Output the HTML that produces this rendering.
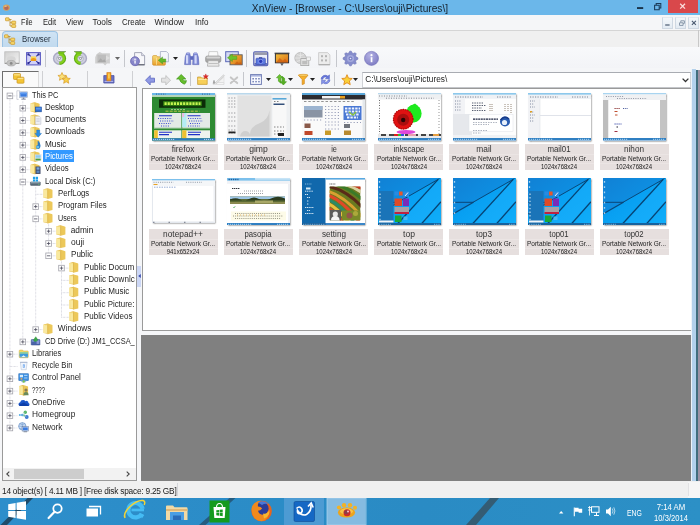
<!DOCTYPE html>
<html><head><meta charset="utf-8"><title>XnView</title>
<style>
*{margin:0;padding:0;box-sizing:border-box}
html,body{width:700px;height:525px;overflow:hidden;background:#f5f6f8;font-family:"Liberation Sans",sans-serif;font-size:8.2px;color:#1a1a1a}
.a{position:absolute}
.t{position:absolute;white-space:nowrap;line-height:10px;height:10px}
svg{position:absolute;overflow:visible}
#root{position:absolute;left:0;top:0;width:700px;height:525px;overflow:hidden;will-change:transform}
#title{left:0;top:0;width:700px;height:15.4px;background:#6bb7ea}
#menubar{left:0;top:15.4px;width:700px;height:14.1px;background:#f5f6f8}
#tabrow{left:0;top:29.5px;width:700px;height:17.5px;background:#f0f0f0;border-top:1px solid #d5d5d5}
#tb1{left:0;top:47px;width:700px;height:21px;background:linear-gradient(#f8f9fb,#f3f4f7)}
#tb2{left:0;top:68px;width:700px;height:20px;background:#f5f6f8}
#tree{left:1.5px;top:87.2px;width:135.4px;height:393.8px;background:#fff;border:1px solid #9a9a9a;overflow:hidden}
#thumbs{left:141.9px;top:88px;width:549.1px;height:243px;background:#fff;border:1px solid #9a9a9a;border-right:none;overflow:hidden}
#preview{left:141px;top:335px;width:550px;height:146px;background:#808080}
#status{left:0;top:481px;width:700px;height:17px;background:#f0f0f0}
#taskbar{left:0;top:498px;width:700px;height:27px;background:#2b8cc9;overflow:hidden}
.sep{position:absolute;width:1px;background:#c5c7cc}
.lab{position:absolute;background:linear-gradient(#e6dfde 0,#e6dfde 10px,#ebe5e4 10px,#ebe5e4 10.7px,#e6dfde 10.7px,#e6dfde 19.1px,#ebe5e4 19.1px,#ebe5e4 19.800px,#e6dfde 19.800px);width:69.3px;height:26.6px}
.th{position:absolute;box-shadow:1.4px 1.4px 1.6px rgba(40,40,40,.72)}
</style></head><body><div id="root">
<div id="title" class="a"></div>
<svg style="left:2px;top:3px" width="9" height="9" viewBox="0 0 9 9"><ellipse cx="4.4" cy="4.6" rx="3.5" ry="3.2" fill="#d2a060"/><ellipse cx="4.4" cy="4.9" rx="2.3" ry="2" fill="#b46a5c"/><ellipse cx="3.6" cy="3.200" rx="1.300" ry=".8" fill="#e4c080"/></svg>
<div class="t" style="left:250px;width:200px;text-align:center;top:2.5999999999999996px;font-size:10.2px;color:#16222e;line-height:11px;height:11px;">XnView - [Browser - C:\Users\ouji\Pictures\]</div>
<div class="a" style="left:667.5px;top:0;width:30.5px;height:12.7px;background:#d9484b"></div>
<svg style="left:630px;top:0" width="70" height="15" viewBox="0 0 70 15"><rect x="7" y="7.2" width="6.2" height="1.7" fill="#12263a"/><path d="M24.6 5.2h4.6v4.600h-4.600z M26.2 5v-1.600h4.600v4.600h-1.500" fill="none" stroke="#1a3a58" stroke-width="1.050"/><path d="M50.200 3.800l4.800 4.800M55 3.800l-4.800 4.800" stroke="#fbdcdc" stroke-width="1.300" fill="none"/></svg>
<div id="menubar" class="a"></div>
<svg style="left:5px;top:16.6px" width="12" height="11" viewBox="0 0 12 11"><path d="M3 2.5h3.5M5 2.5v6.5h2M5 5.7h2" stroke="#b58a2a" stroke-width=".8" fill="none"/><rect x=".5" y=".8" width="3.6" height="3" rx=".5" fill="#f7d66a" stroke="#c8962c" stroke-width=".7"/><rect x="6.7" y="4.1" width="4" height="2.8" rx=".5" fill="#f7d66a" stroke="#c8962c" stroke-width=".7"/><rect x="6.7" y="7.6" width="4" height="2.8" rx=".5" fill="#f7d66a" stroke="#c8962c" stroke-width=".7"/></svg>
<div class="t" style="left:20.7px;top:17.4px;font-size:8.3px;color:#222;transform:scaleX(0.87);transform-origin:0 50%;">File</div>
<div class="t" style="left:42.6px;top:17.4px;font-size:8.3px;color:#222;transform:scaleX(0.91);transform-origin:0 50%;">Edit</div>
<div class="t" style="left:65.5px;top:17.4px;font-size:8.3px;color:#222;transform:scaleX(0.98);transform-origin:0 50%;">View</div>
<div class="t" style="left:92.5px;top:17.4px;font-size:8.3px;color:#222;transform:scaleX(1);transform-origin:0 50%;">Tools</div>
<div class="t" style="left:121.7px;top:17.4px;font-size:8.3px;color:#222;transform:scaleX(0.945);transform-origin:0 50%;">Create</div>
<div class="t" style="left:154.5px;top:17.4px;font-size:8.3px;color:#222;transform:scaleX(1);transform-origin:0 50%;">Window</div>
<div class="t" style="left:194.5px;top:17.4px;font-size:8.3px;color:#222;transform:scaleX(0.975);transform-origin:0 50%;">Info</div>
<div class="a" style="left:661.5px;top:17px;width:11px;height:12px;background:linear-gradient(#f4f7fa,#e3ebf3);border:1px solid #cfd8e2;border-top-color:#e4e9ef"></div>
<div class="a" style="left:675px;top:17px;width:11px;height:12px;background:linear-gradient(#f4f7fa,#e3ebf3);border:1px solid #cfd8e2;border-top-color:#e4e9ef"></div>
<div class="a" style="left:688px;top:17px;width:11px;height:12px;background:linear-gradient(#f4f7fa,#e3ebf3);border:1px solid #cfd8e2;border-top-color:#e4e9ef"></div>
<svg style="left:661.5px;top:17px" width="38" height="12" viewBox="0 0 38 12"><rect x="3.2" y="7.4" width="4.4" height="1.2" fill="#4a5a70"/><path d="M17.5 5.8h3.6v2.6h-3.6zM18.8 5.5v-1.7h3.6v2.6h-1.2" fill="none" stroke="#7f8ea3" stroke-width=".9"/><path d="M29.9 3.9l4 4M33.9 3.9l-4 4" stroke="#4a5a70" stroke-width="1.1"/></svg>
<div id="tabrow" class="a"></div>
<div class="a" style="left:1.5px;top:31px;width:56.5px;height:16.5px;background:linear-gradient(#cfe3f4,#c0d9ee);border:1px solid #9cc3e4;border-bottom:none;border-radius:4px 4px 0 0"></div>
<svg style="left:4px;top:33.6px" width="12" height="11" viewBox="0 0 12 11"><path d="M3 2.5h3.5M5 2.5v6.5h2M5 5.7h2" stroke="#b58a2a" stroke-width=".8" fill="none"/><rect x=".5" y=".8" width="3.6" height="3" rx=".5" fill="#f7d66a" stroke="#c8962c" stroke-width=".7"/><rect x="6.7" y="4.1" width="4" height="2.8" rx=".5" fill="#f7d66a" stroke="#c8962c" stroke-width=".7"/><rect x="6.7" y="7.6" width="4" height="2.8" rx=".5" fill="#f7d66a" stroke="#c8962c" stroke-width=".7"/></svg>
<div class="t" style="left:21.8px;top:34.1px;font-size:8.3px;color:#26323f;transform:scaleX(0.94);transform-origin:0 50%;">Browser</div>
<div id="tb1" class="a"></div>
<div id="tb2" class="a"></div>
<div class="sep" style="left:45.0px;top:50px;height:17px"></div>
<div class="sep" style="left:124.0px;top:50px;height:17px"></div>
<div class="sep" style="left:246.0px;top:50px;height:17px"></div>
<div class="sep" style="left:336.0px;top:50px;height:17px"></div>
<div class="sep" style="left:190.0px;top:72px;height:14px"></div>
<div class="sep" style="left:242.5px;top:72px;height:14px"></div>
<div class="sep" style="left:334.0px;top:72px;height:14px"></div>
<svg style="left:115.3px;top:57px" width="5" height="3" viewBox="0 0 5 3"><path d="M0 0h5l-2.5 3z" fill="#666"/></svg>
<svg style="left:173.3px;top:57px" width="5" height="3" viewBox="0 0 5 3"><path d="M0 0h5l-2.5 3z" fill="#222"/></svg>
<svg style="left:265.8px;top:78px" width="5" height="3" viewBox="0 0 5 3"><path d="M0 0h5l-2.5 3z" fill="#222"/></svg>
<svg style="left:288px;top:78px" width="5" height="3" viewBox="0 0 5 3"><path d="M0 0h5l-2.5 3z" fill="#222"/></svg>
<svg style="left:310px;top:78px" width="5" height="3" viewBox="0 0 5 3"><path d="M0 0h5l-2.5 3z" fill="#222"/></svg>
<svg style="left:353px;top:78px" width="5" height="3" viewBox="0 0 5 3"><path d="M0 0h5l-2.5 3z" fill="#222"/></svg>
<svg style="left:4px;top:51px" width="16" height="15.5" viewBox="0 0 16 15.5"><defs><linearGradient id="g1" x1="0" y1="0" x2="1" y2="1"><stop offset="0" stop-color="#d0d0d0"/><stop offset="1" stop-color="#f4f4f4"/></linearGradient></defs><rect x=".8" y=".8" width="14.4" height="11.8" fill="url(#g1)" stroke="#b9b9b9" stroke-width=".8"/><path d="M1 12.3h14" stroke="#8f8f8f" stroke-width="1"/><ellipse cx="7.2" cy="8.2" rx="4.5" ry="3" fill="#d6d6d6"/><ellipse cx="7.2" cy="12.2" rx="4.4" ry="2.8" fill="#c2c2c2" stroke="#a2a2a2" stroke-width=".6"/><circle cx="7.2" cy="12.4" r="1.4" fill="#8a8a8a"/></svg>
<svg style="left:25.500px;top:51.500px" width="15" height="13.500" viewBox="0 0 15 13.500"><rect x=".6" y=".6" width="13.800" height="12.300" fill="#d2d2f8" stroke="#5656c0" stroke-width="1"/><path d="M2 2l2.800 2.400M13 2l-2.800 2.400M2 11.500l2.800-2.400M13 11.500l-2.800-2.400" stroke="#3434a0" stroke-width="1.100"/><rect x="1.400" y="1.400" width="2" height="2" fill="#2c2c94"/><rect x="11.600" y="1.400" width="2" height="2" fill="#2c2c94"/><rect x="1.400" y="10.100" width="2" height="2" fill="#2c2c94"/><rect x="11.600" y="10.100" width="2" height="2" fill="#2c2c94"/><rect x="4.800" y="4.400" width="5.400" height="4.600" fill="#f8d858"/><path d="M4.800 9v-2q2.700-2.200 5.400 0v2z" fill="#ee9a18"/></svg>
<svg style="left:0;top:0" width="130" height="70" viewBox="0 0 130 70"><g transform="translate(52.0,50.900)"><path d="M7.500 .9A6.600 6.600 0 0 0 7.500 14.100Z" fill="#a9a9c4"/><path d="M7.500 2.300A5.200 5.200 0 0 0 7.500 12.700Z" fill="#cfcfe0"/><path d="M7.500 .9A6.600 6.600 0 0 1 7.500 14.100Z" fill="#5eaa14"/><path d="M7.500 2A5.500 5.500 0 0 1 7.500 13Z" fill="#84d01c"/><path d="M6.300 .7h7.600" stroke="#3c7410" stroke-width=".7"/><path d="M6.300 1h6.500l-1 2H6.300z" fill="#74c218"/><circle cx="7.500" cy="7.700" r="2.900" fill="#e6e8ee" stroke="#8e92a8" stroke-width=".5"/><path d="M5.800 6.800h3.400L7.500 9.200z" fill="#fff" stroke="#4a5060" stroke-width=".5"/></g></svg>
<svg style="left:0;top:0" width="130" height="70" viewBox="0 0 130 70"><g transform="translate(88.0,50.900) scale(-1,1)"><path d="M7.500 .9A6.600 6.600 0 0 0 7.500 14.100Z" fill="#a9a9c4"/><path d="M7.500 2.300A5.200 5.200 0 0 0 7.500 12.700Z" fill="#cfcfe0"/><path d="M7.500 .9A6.600 6.600 0 0 1 7.500 14.100Z" fill="#5eaa14"/><path d="M7.500 2A5.500 5.500 0 0 1 7.500 13Z" fill="#84d01c"/><path d="M6.300 .7h7.600" stroke="#3c7410" stroke-width=".7"/><path d="M6.300 1h6.500l-1 2H6.300z" fill="#74c218"/><circle cx="7.500" cy="7.700" r="2.900" fill="#e6e8ee" stroke="#8e92a8" stroke-width=".5"/><path d="M5.800 6.800h3.400L7.500 9.200z" fill="#fff" stroke="#4a5060" stroke-width=".5"/></g></svg>
<svg style="left:94px;top:50.5px" width="17.5" height="15.5" viewBox="0 0 17.5 15.5"><path d="M2.5 3.2l3.2-2.2 2.4 1.2h7.8v10.2h-3l-1.8 2-2-2H1.2V6.2z" fill="#cfcfcf"/><rect x="3.4" y="3.6" width="8.6" height="7.6" fill="#bdbdbd"/><path d="M3.4 11.2l3.2-4 2.2 2.4 1.6-1.4 1.6 3z" fill="#a9a9a9"/><path d="M12 4.5l4 2.5-4 2.6z" fill="#dedede"/></svg>
<svg style="left:129.5px;top:51.5px" width="15.5" height="14" viewBox="0 0 15.5 14"><path d="M4.6 .6h7l3 3v9.2h-10z" fill="#f7f7fa" stroke="#9c9fb0" stroke-width=".9"/><path d="M11.6 .6v3h3" fill="#dcdce6" stroke="#9c9fb0" stroke-width=".7"/><path d="M5 12.8h9.6" stroke="#50535f" stroke-width="1"/><circle cx="5" cy="9.2" r="4.5" fill="#8584c8" stroke="#6562ae" stroke-width=".7"/><ellipse cx="4.4" cy="7.6" rx="2.6" ry="1.8" fill="#a9a8dc" opacity=".7"/><rect x="4.4" y="8.6" width="1.3" height="3" fill="#fff"/><circle cx="5" cy="7.2" r=".8" fill="#fff"/></svg>
<svg style="left:151.5px;top:50.5px" width="17" height="15" viewBox="0 0 17 15"><defs><linearGradient id="g2" x1="0" y1="0" x2="0" y2="1"><stop offset="0" stop-color="#f8dc78"/><stop offset="1" stop-color="#e9a02c"/></linearGradient></defs><path d="M.6 5.6q0-1 1-1h3l1 1.2h6.8q1 0 1 1v6.4q0 1-1 1H1.6q-1 0-1-1z" fill="url(#g2)" stroke="#c98a22" stroke-width=".6"/><path d="M8.4 .5h6l2 2v8.3h-8z" fill="#f4f6fb" stroke="#9aa2bc" stroke-width=".7"/><path d="M6.2 9.3l4.4-3.4v2h3.2v3h-3.2v2z" fill="#62b82a" stroke="#3f8f17" stroke-width=".4"/><path d="M4 6.8h.9v7H4z" fill="#f9e9a8" opacity=".8"/></svg>
<svg style="left:184px;top:51.500px" width="15.500" height="13.500" viewBox="0 0 15.500 13.500"><path d="M2.600 1h3l.8 3.200.4 8.400H.6l.6-7.600z" fill="#7c88d4" stroke="#5560b4" stroke-width=".6"/><path d="M9.900 1h3l1.400 4 .6 7.600H8.700l.4-8.400z" fill="#7c88d4" stroke="#5560b4" stroke-width=".6"/><rect x="6.200" y="4.200" width="3.100" height="3.600" fill="#5c68be"/><rect x="2" y="3.200" width="2.200" height="8.400" fill="#d4d9f8"/><rect x="10.500" y="3.200" width="2.200" height="8.400" fill="#d4d9f8"/><rect x="2.600" y=".6" width="3" height="1.500" fill="#a0a8e4"/><rect x="9.900" y=".6" width="3" height="1.500" fill="#a0a8e4"/></svg>
<svg style="left:204.500px;top:51px" width="16.500" height="16" viewBox="0 0 16.500 16"><path d="M4 .6h8.500l.6 5H3.400z" fill="#fafafa" stroke="#b2b2b2" stroke-width=".6"/><rect x=".6" y="5" width="15.300" height="6.400" rx="1.800" fill="#a7a7a7" stroke="#8a8a8a" stroke-width=".6"/><rect x="1.400" y="5.600" width="13.700" height="2" rx="1" fill="#d4d4d4"/><path d="M3.200 9.600h10.100l.8 5.600H2.400z" fill="#e9e9e9" stroke="#9a9a9a" stroke-width=".6"/><path d="M3.600 12.500h9.300" stroke="#b5b5b5" stroke-width=".8"/></svg>
<svg style="left:224.500px;top:50.500px" width="18" height="15" viewBox="0 0 18 15"><defs><linearGradient id="g3" x1="0" y1="0" x2="1" y2="1"><stop offset="0" stop-color="#f4c23c"/><stop offset="1" stop-color="#d96a14"/></linearGradient></defs><rect x=".7" y=".7" width="12.600" height="10" fill="#d4daf4" stroke="#5b68b8" stroke-width="1"/><rect x="5" y="3.800" width="12.200" height="10" fill="url(#g3)" stroke="#5a5c62" stroke-width=".9"/><path d="M2.400 6.800l5-3.800v2.200h4.400v3.200H7.400v2.200z" fill="#6cc22c" stroke="#3f9218" stroke-width=".4"/><path d="M9 13.400l3-3 2 1.600 1.400-1 1.600 2.400z" fill="#c65a10" opacity=".7"/></svg>
<svg style="left:252.500px;top:50.500px" width="15.500" height="16" viewBox="0 0 15.500 16"><rect x=".8" y=".8" width="13.900" height="13.800" rx="1" fill="#eceef8" stroke="#5a64b4" stroke-width="1.300"/><rect x="1.400" y="1.400" width="12.700" height="2.600" fill="#9a9cac"/><rect x="1.400" y="12" width="12.700" height="2.400" fill="#6a74c0"/><rect x="3" y="7.200" width="9.400" height="6.200" rx=".8" fill="#5b7ae0" stroke="#3848a8" stroke-width=".6"/><rect x="6" y="6.200" width="3.200" height="1.400" fill="#3848a8"/><circle cx="7.700" cy="10.400" r="2.100" fill="#2a3ab8" stroke="#aab8ff" stroke-width=".6"/></svg>
<svg style="left:273.500px;top:51.500px" width="16" height="14.500" viewBox="0 0 16 14.500"><rect x=".6" y=".6" width="14.800" height="1.400" fill="#55585e"/><rect x="1.400" y="1.800" width="13.200" height="9" fill="url(#g3)" stroke="#2f3136" stroke-width="1"/><path d="M2 10.400l3.800-4.400 3 2.800 2.200-2 3.200 3.600z" fill="#cc5c10" opacity=".75"/><path d="M6.200 11.300h3.600l-1.800 2.600z" fill="#55585e"/></svg>
<svg style="left:294px;top:51.500px" width="17" height="14.500" viewBox="0 0 17 14.500"><circle cx="6.400" cy="6" r="5.600" fill="#d2d2d2" stroke="#b0b0b0" stroke-width=".7"/><path d="M1 6h10.800M6.400 .4v11.200M2.600 2.400q3.800 2.600 7.600 0M2.600 9.600q3.800-2.600 7.600 0" stroke="#ececec" stroke-width=".7" fill="none"/><rect x="6.800" y="6.600" width="8" height="7" fill="#e6e6e6" stroke="#a4a4a4" stroke-width=".8"/><rect x="8.200" y="8.800" width="5.200" height="3.600" fill="#bdbdbd"/><rect x="12.600" y="5" width="4" height="3.600" fill="#f0f0f0" stroke="#b4b4b4" stroke-width=".6"/></svg>
<svg style="left:318px;top:52px" width="12.500" height="13.500" viewBox="0 0 12.500 13.500"><path d="M.6 .6h9l2.300 2.300v9.700H.6z" fill="#ececec" stroke="#c2c2c2" stroke-width=".7"/><path d="M.6 12.800h11.300" stroke="#9c9c9c" stroke-width=".9"/><g fill="#b4b4b4"><rect x="3" y="3.200" width="2" height="2"/><rect x="7" y="3.200" width="2" height="2"/><rect x="3" y="7.400" width="2" height="2"/><rect x="7" y="7.400" width="2" height="2"/></g></svg>
<svg style="left:343px;top:51px" width="15" height="15" viewBox="0 0 15 15"><polygon points="14.86,6.77 14.86,8.23 12.95,9.15 12.53,10.19 13.22,12.19 12.19,13.22 10.19,12.53 9.15,12.95 8.23,14.86 6.77,14.86 5.85,12.95 4.81,12.53 2.81,13.22 1.78,12.19 2.47,10.19 2.05,9.15 0.14,8.23 0.14,6.77 2.05,5.85 2.47,4.81 1.78,2.81 2.81,1.78 4.81,2.47 5.85,2.05 6.77,0.14 8.23,0.14 9.15,2.05 10.19,2.47 12.19,1.78 13.22,2.81 12.53,4.81 12.95,5.85" fill="#868dcc" stroke="#6a70b6" stroke-width=".6" stroke-linejoin="round"/><circle cx="7.500" cy="7.500" r="3.600" fill="#a4aadd"/><circle cx="7.500" cy="7.500" r="1.900" fill="#7a80c4"/><circle cx="7.500" cy="7.500" r=".8" fill="#e4e6f8"/></svg>
<svg style="left:364px;top:51px" width="15" height="15" viewBox="0 0 15 15"><defs><radialGradient id="g4" cx=".4" cy=".3" r=".8"><stop offset="0" stop-color="#b4b2e4"/><stop offset="1" stop-color="#7a77c0"/></radialGradient></defs><circle cx="7.500" cy="7.400" r="7" fill="url(#g4)" stroke="#6c69b4" stroke-width=".6"/><rect x="6.700" y="6.200" width="1.700" height="5" fill="#fff"/><circle cx="7.500" cy="4.200" r="1.100" fill="#fff"/></svg>
<div class="a" style="left:1.500px;top:70.500px;width:37px;height:17.500px;background:#fafafa;border-top:1.500px solid #6e6e6e;border-left:1.500px solid #6e6e6e;border-right:1px solid #dcdcdc"></div>
<div class="sep" style="left:42.3px;top:71px;height:16px;background:#cfd0d3"></div>
<div class="sep" style="left:87.0px;top:71px;height:16px;background:#cfd0d3"></div>
<div class="sep" style="left:132.0px;top:71px;height:16px;background:#cfd0d3"></div>
<svg style="left:13px;top:73px" width="12" height="11" viewBox="0 0 12 11"><rect x="0.5" y="0.5" width="7" height="6" rx=".8" fill="#f4c534" stroke="#c99526" stroke-width=".7"/><rect x="1.1" y="1.2" width="5.8" height="1.200" fill="#fae28c"/><rect x="4" y="4.2" width="7" height="6" rx=".8" fill="#f4c534" stroke="#c99526" stroke-width=".7"/><rect x="4.6" y="4.9" width="5.8" height="1.200" fill="#fae28c"/></svg>
<svg style="left:57px;top:72px" width="15" height="13" viewBox="0 0 15 13"><polygon points="5.00,0.50 6.18,3.18 9.09,3.47 6.90,5.42 7.53,8.28 5.00,6.80 2.47,8.28 3.10,5.42 0.91,3.47 3.82,3.18" fill="#fbe27a" stroke="#d79a22" stroke-width="0.7" stroke-linejoin="round"/><polygon points="9.20,3.50 10.38,6.18 13.29,6.47 11.10,8.42 11.73,11.28 9.20,9.80 6.67,11.28 7.30,8.42 5.11,6.47 8.02,6.18" fill="#f8d04a" stroke="#d79a22" stroke-width="0.7" stroke-linejoin="round"/></svg>
<svg style="left:102.500px;top:72px" width="12" height="12" viewBox="0 0 12 12"><path d="M.8 3.600h10.200v7.400H.8z" fill="#6a72c4" stroke="#4a50a4" stroke-width=".8"/><path d="M1.600 9.400h8.600" stroke="#b4b8ec" stroke-width="1"/><path d="M3.800 .5h4.200v8.300H3.800z" fill="#f4a21c" stroke="#c8701a" stroke-width=".5"/><path d="M5.200 1.400h1.400v5H5.200z" fill="#fbd86a"/></svg>
<svg style="left:144.500px;top:74.500px" width="10" height="10.500" viewBox="0 0 10 10.500"><path d="M.5 5.200L5.200 .5v2.700h4.300v4H5.200v2.800z" fill="#8f99e4" stroke="#5c66c0" stroke-width=".8" stroke-linejoin="round"/></svg>
<svg style="left:161px;top:74.500px" width="10" height="10.500" viewBox="0 0 10 10.500"><path d="M9.500 5.200L4.800 .5v2.700H.5v4h4.300v2.800z" fill="#e2e2e2" stroke="#bcbcbc" stroke-width=".8" stroke-linejoin="round"/></svg>
<svg style="left:175.500px;top:74px" width="11" height="10.500" viewBox="0 0 11 10.500"><path d="M5.200 .5L.6 5h2.800q.6 3.600 4.800 5.200 2.200-1 2.200-3.600-1.600.8-3-.4-.8-.8-.6-1.200h3z" fill="#66be2c" stroke="#3f951a" stroke-width=".7" stroke-linejoin="round"/></svg>
<svg style="left:196.500px;top:73.500px" width="11.500" height="11" viewBox="0 0 11.500 11"><path d="M.6 3h3.200l.8 1h5.600v6.400H.6z" fill="#f7cf58" stroke="#c99a2c" stroke-width=".7"/><rect x="1.200" y="4.600" width="8.400" height="1.400" fill="#fbe7a0"/><polygon points="8.80,-0.10 9.45,1.71 11.37,1.77 9.85,2.94 10.39,4.78 8.80,3.70 7.21,4.78 7.75,2.94 6.23,1.77 8.15,1.71" fill="#e02626" stroke="#b81414" stroke-width="0.4" stroke-linejoin="round"/></svg>
<svg style="left:212px;top:73.500px" width="13" height="11" viewBox="0 0 13 11"><path d="M1 8.600h11v1.800H1z" fill="#fdfdfd" stroke="#c4c4c4" stroke-width=".5"/><path d="M3 9L11.600 .8l.8 1L5 9.400z" fill="#e4e4e4" stroke="#bdbdbd" stroke-width=".6"/><path d="M2 6.400v3.400" stroke="#6a6a6a" stroke-width="1"/><path d="M5.600 8.600h6.400V3.200z" fill="#f2f2f2" stroke="#cfcfcf" stroke-width=".4"/></svg>
<svg style="left:228.500px;top:75.500px" width="10" height="8.500" viewBox="0 0 10 8.500"><path d="M1.800 1.400l6.400 5.700M8.200 1.400L1.800 7.100" stroke="#c6c6c6" stroke-width="2" stroke-linecap="round"/></svg>
<svg style="left:249.500px;top:73.500px" width="12" height="11" viewBox="0 0 12 11"><rect x=".6" y=".6" width="10.800" height="9.800" fill="#fafbff" stroke="#6f7db4" stroke-width="1"/><rect x="1" y="1" width="10" height="1.600" fill="#aab4de"/><g fill="#6f7db4"><rect x="2.400" y="4" width="1.500" height="1.500"/><rect x="5.300" y="4" width="1.500" height="1.500"/><rect x="8.200" y="4" width="1.500" height="1.500"/><rect x="2.400" y="6.900" width="1.500" height="1.500"/><rect x="5.300" y="6.900" width="1.500" height="1.500"/><rect x="8.200" y="6.900" width="1.500" height="1.500"/></g></svg>
<svg style="left:275.500px;top:73.500px" width="11" height="11.500" viewBox="0 0 11 11.500"><path d="M3.600 .5L.5 3.800h1.900v3.400l2.500 2V3.800h1.900z" fill="#6cc230" stroke="#3f951a" stroke-width=".6" stroke-linejoin="round"/><path d="M7.400 11L10.500 7.700H8.600V4.300l-2.500-2v5.400H4.200z" fill="#56ae22" stroke="#3f951a" stroke-width=".6" stroke-linejoin="round"/></svg>
<svg style="left:297.500px;top:74px" width="10.500" height="11" viewBox="0 0 10.500 11"><path d="M.5 1.200h9.500L6.300 5.600v4.200l-2.100.8V5.600z" fill="#f6b02a" stroke="#d08412" stroke-width=".7" stroke-linejoin="round"/><ellipse cx="5.200" cy="1.300" rx="4.700" ry="1" fill="#fbd56e" stroke="#d08412" stroke-width=".5"/></svg>
<svg style="left:319.500px;top:73.500px" width="11" height="11" viewBox="0 0 11 11"><path d="M1 5.200A4.300 4.300 0 0 1 8 2.200L9.400 .8v4H5.400L6.800 3.400A2.600 2.600 0 0 0 2.800 5.200z" fill="#6878dc" stroke="#4454b8" stroke-width=".5"/><path d="M10 5.800A4.300 4.300 0 0 1 3 8.800L1.600 10.200v-4h4L4.200 7.600A2.600 2.600 0 0 0 8.200 5.800z" fill="#8a98ec" stroke="#4454b8" stroke-width=".5"/></svg>
<svg style="left:340.500px;top:73.500px" width="12" height="11.500" viewBox="0 0 12 11.500"><polygon points="6.00,0.70 7.47,4.18 11.23,4.50 8.38,6.97 9.23,10.65 6.00,8.70 2.77,10.65 3.62,6.97 0.77,4.50 4.53,4.18" fill="#fad038" stroke="#e08a1a" stroke-width="0.9" stroke-linejoin="round"/></svg>
<div class="a" style="left:361.500px;top:72.300px;width:329px;height:15.700px;background:#fff;border:1px solid #d0d2d6;border-top-color:#a9acb2;border-bottom:1px solid #c4c6ca"></div>
<div class="t" style="left:365.2px;top:73.9px;font-size:8.3px;color:#222;">C:\Users\ouji\Pictures\</div>
<svg style="left:681.500px;top:77.500px" width="7" height="4.500" viewBox="0 0 7 4.500"><path d="M.6 .6l2.900 2.900L6.400 .6" fill="none" stroke="#333" stroke-width="1.300"/></svg>
<div id="tree" class="a">
<svg style="left:-2.5px;top:-88.2px" width="140" height="480" viewBox="0 0 140 480"><path d="M9.9 98.9L9.9 428.0" stroke="#c6c6d2" stroke-width=".8" stroke-dasharray=".7 .7" fill="none"/><path d="M22.8 100.9L22.8 341.9" stroke="#c6c6d2" stroke-width=".8" stroke-dasharray=".7 .7" fill="none"/><path d="M35.7 187.0L35.7 329.6" stroke="#c6c6d2" stroke-width=".8" stroke-dasharray=".7 .7" fill="none"/><path d="M48.6 223.9L48.6 255.8" stroke="#c6c6d2" stroke-width=".8" stroke-dasharray=".7 .7" fill="none"/><path d="M61.5 260.8L61.5 317.3" stroke="#c6c6d2" stroke-width=".8" stroke-dasharray=".7 .7" fill="none"/><path d="M12.9 95.9L17.4 95.9" stroke="#c6c6d2" stroke-width=".8" stroke-dasharray=".7 .7" fill="none"/><path d="M25.8 108.2L30.3 108.2" stroke="#c6c6d2" stroke-width=".8" stroke-dasharray=".7 .7" fill="none"/><path d="M25.8 120.5L30.3 120.5" stroke="#c6c6d2" stroke-width=".8" stroke-dasharray=".7 .7" fill="none"/><path d="M25.8 132.8L30.3 132.8" stroke="#c6c6d2" stroke-width=".8" stroke-dasharray=".7 .7" fill="none"/><path d="M25.8 145.10000000000002L30.3 145.10000000000002" stroke="#c6c6d2" stroke-width=".8" stroke-dasharray=".7 .7" fill="none"/><path d="M25.8 157.4L30.3 157.4" stroke="#c6c6d2" stroke-width=".8" stroke-dasharray=".7 .7" fill="none"/><path d="M25.8 169.70000000000002L30.3 169.70000000000002" stroke="#c6c6d2" stroke-width=".8" stroke-dasharray=".7 .7" fill="none"/><path d="M25.8 182.0L30.3 182.0" stroke="#c6c6d2" stroke-width=".8" stroke-dasharray=".7 .7" fill="none"/><path d="M35.7 194.3L43.2 194.3" stroke="#c6c6d2" stroke-width=".8" stroke-dasharray=".7 .7" fill="none"/><path d="M38.7 206.60000000000002L43.2 206.60000000000002" stroke="#c6c6d2" stroke-width=".8" stroke-dasharray=".7 .7" fill="none"/><path d="M38.7 218.9L43.2 218.9" stroke="#c6c6d2" stroke-width=".8" stroke-dasharray=".7 .7" fill="none"/><path d="M51.6 231.20000000000002L56.1 231.20000000000002" stroke="#c6c6d2" stroke-width=".8" stroke-dasharray=".7 .7" fill="none"/><path d="M51.6 243.50000000000003L56.1 243.50000000000003" stroke="#c6c6d2" stroke-width=".8" stroke-dasharray=".7 .7" fill="none"/><path d="M51.6 255.8L56.1 255.8" stroke="#c6c6d2" stroke-width=".8" stroke-dasharray=".7 .7" fill="none"/><path d="M64.5 268.1L69.0 268.1" stroke="#c6c6d2" stroke-width=".8" stroke-dasharray=".7 .7" fill="none"/><path d="M61.5 280.4L69.0 280.4" stroke="#c6c6d2" stroke-width=".8" stroke-dasharray=".7 .7" fill="none"/><path d="M61.5 292.70000000000005L69.0 292.70000000000005" stroke="#c6c6d2" stroke-width=".8" stroke-dasharray=".7 .7" fill="none"/><path d="M61.5 305.0L69.0 305.0" stroke="#c6c6d2" stroke-width=".8" stroke-dasharray=".7 .7" fill="none"/><path d="M61.5 317.3L69.0 317.3" stroke="#c6c6d2" stroke-width=".8" stroke-dasharray=".7 .7" fill="none"/><path d="M38.7 329.6L43.2 329.6" stroke="#c6c6d2" stroke-width=".8" stroke-dasharray=".7 .7" fill="none"/><path d="M25.8 341.9L30.3 341.9" stroke="#c6c6d2" stroke-width=".8" stroke-dasharray=".7 .7" fill="none"/><path d="M12.9 354.20000000000005L17.4 354.20000000000005" stroke="#c6c6d2" stroke-width=".8" stroke-dasharray=".7 .7" fill="none"/><path d="M9.9 366.5L17.4 366.5" stroke="#c6c6d2" stroke-width=".8" stroke-dasharray=".7 .7" fill="none"/><path d="M12.9 378.80000000000007L17.4 378.80000000000007" stroke="#c6c6d2" stroke-width=".8" stroke-dasharray=".7 .7" fill="none"/><path d="M12.9 391.1L17.4 391.1" stroke="#c6c6d2" stroke-width=".8" stroke-dasharray=".7 .7" fill="none"/><path d="M12.9 403.4L17.4 403.4" stroke="#c6c6d2" stroke-width=".8" stroke-dasharray=".7 .7" fill="none"/><path d="M12.9 415.70000000000005L17.4 415.70000000000005" stroke="#c6c6d2" stroke-width=".8" stroke-dasharray=".7 .7" fill="none"/><path d="M12.9 428.0L17.4 428.0" stroke="#c6c6d2" stroke-width=".8" stroke-dasharray=".7 .7" fill="none"/><rect x="7.1" y="93.1" width="5.600" height="5.600" fill="#fff" stroke="#a4a4ac" stroke-width=".8"/><path d="M8.2 95.9h3.400" stroke="#4a4a5a" stroke-width=".8"/><rect x="20.0" y="105.4" width="5.600" height="5.600" fill="#fff" stroke="#a4a4ac" stroke-width=".8"/><path d="M21.1 108.2h3.400" stroke="#4a4a5a" stroke-width=".8"/><path d="M22.8 106.5v3.400" stroke="#4a4a5a" stroke-width=".8"/><rect x="20.0" y="117.7" width="5.600" height="5.600" fill="#fff" stroke="#a4a4ac" stroke-width=".8"/><path d="M21.1 120.5h3.400" stroke="#4a4a5a" stroke-width=".8"/><path d="M22.8 118.8v3.400" stroke="#4a4a5a" stroke-width=".8"/><rect x="20.0" y="130.0" width="5.600" height="5.600" fill="#fff" stroke="#a4a4ac" stroke-width=".8"/><path d="M21.1 132.8h3.400" stroke="#4a4a5a" stroke-width=".8"/><path d="M22.8 131.1v3.400" stroke="#4a4a5a" stroke-width=".8"/><rect x="20.0" y="142.3" width="5.600" height="5.600" fill="#fff" stroke="#a4a4ac" stroke-width=".8"/><path d="M21.1 145.1h3.400" stroke="#4a4a5a" stroke-width=".8"/><path d="M22.8 143.4v3.400" stroke="#4a4a5a" stroke-width=".8"/><rect x="20.0" y="154.6" width="5.600" height="5.600" fill="#fff" stroke="#a4a4ac" stroke-width=".8"/><path d="M21.1 157.4h3.400" stroke="#4a4a5a" stroke-width=".8"/><path d="M22.8 155.7v3.400" stroke="#4a4a5a" stroke-width=".8"/><rect x="20.0" y="166.9" width="5.600" height="5.600" fill="#fff" stroke="#a4a4ac" stroke-width=".8"/><path d="M21.1 169.7h3.400" stroke="#4a4a5a" stroke-width=".8"/><path d="M22.8 168.0v3.400" stroke="#4a4a5a" stroke-width=".8"/><rect x="20.0" y="179.2" width="5.600" height="5.600" fill="#fff" stroke="#a4a4ac" stroke-width=".8"/><path d="M21.1 182.0h3.400" stroke="#4a4a5a" stroke-width=".8"/><rect x="32.9" y="203.8" width="5.600" height="5.600" fill="#fff" stroke="#a4a4ac" stroke-width=".8"/><path d="M34.0 206.6h3.400" stroke="#4a4a5a" stroke-width=".8"/><path d="M35.7 204.9v3.400" stroke="#4a4a5a" stroke-width=".8"/><rect x="32.9" y="216.1" width="5.600" height="5.600" fill="#fff" stroke="#a4a4ac" stroke-width=".8"/><path d="M34.0 218.9h3.400" stroke="#4a4a5a" stroke-width=".8"/><rect x="45.8" y="228.4" width="5.600" height="5.600" fill="#fff" stroke="#a4a4ac" stroke-width=".8"/><path d="M46.9 231.2h3.400" stroke="#4a4a5a" stroke-width=".8"/><path d="M48.6 229.5v3.400" stroke="#4a4a5a" stroke-width=".8"/><rect x="45.8" y="240.7" width="5.600" height="5.600" fill="#fff" stroke="#a4a4ac" stroke-width=".8"/><path d="M46.9 243.5h3.400" stroke="#4a4a5a" stroke-width=".8"/><path d="M48.6 241.8v3.400" stroke="#4a4a5a" stroke-width=".8"/><rect x="45.8" y="253.0" width="5.600" height="5.600" fill="#fff" stroke="#a4a4ac" stroke-width=".8"/><path d="M46.9 255.8h3.400" stroke="#4a4a5a" stroke-width=".8"/><rect x="58.7" y="265.3" width="5.600" height="5.600" fill="#fff" stroke="#a4a4ac" stroke-width=".8"/><path d="M59.8 268.1h3.400" stroke="#4a4a5a" stroke-width=".8"/><path d="M61.5 266.4v3.400" stroke="#4a4a5a" stroke-width=".8"/><rect x="32.9" y="326.8" width="5.600" height="5.600" fill="#fff" stroke="#a4a4ac" stroke-width=".8"/><path d="M34.0 329.6h3.400" stroke="#4a4a5a" stroke-width=".8"/><path d="M35.7 327.9v3.400" stroke="#4a4a5a" stroke-width=".8"/><rect x="20.0" y="339.1" width="5.600" height="5.600" fill="#fff" stroke="#a4a4ac" stroke-width=".8"/><path d="M21.1 341.9h3.400" stroke="#4a4a5a" stroke-width=".8"/><path d="M22.8 340.2v3.400" stroke="#4a4a5a" stroke-width=".8"/><rect x="7.1" y="351.4" width="5.600" height="5.600" fill="#fff" stroke="#a4a4ac" stroke-width=".8"/><path d="M8.2 354.2h3.400" stroke="#4a4a5a" stroke-width=".8"/><path d="M9.9 352.5v3.400" stroke="#4a4a5a" stroke-width=".8"/><rect x="7.1" y="376.0" width="5.600" height="5.600" fill="#fff" stroke="#a4a4ac" stroke-width=".8"/><path d="M8.2 378.8h3.400" stroke="#4a4a5a" stroke-width=".8"/><path d="M9.9 377.1v3.400" stroke="#4a4a5a" stroke-width=".8"/><rect x="7.1" y="388.3" width="5.600" height="5.600" fill="#fff" stroke="#a4a4ac" stroke-width=".8"/><path d="M8.2 391.1h3.400" stroke="#4a4a5a" stroke-width=".8"/><path d="M9.9 389.4v3.400" stroke="#4a4a5a" stroke-width=".8"/><rect x="7.1" y="400.6" width="5.600" height="5.600" fill="#fff" stroke="#a4a4ac" stroke-width=".8"/><path d="M8.2 403.4h3.400" stroke="#4a4a5a" stroke-width=".8"/><path d="M9.9 401.7v3.400" stroke="#4a4a5a" stroke-width=".8"/><rect x="7.1" y="412.9" width="5.600" height="5.600" fill="#fff" stroke="#a4a4ac" stroke-width=".8"/><path d="M8.2 415.7h3.400" stroke="#4a4a5a" stroke-width=".8"/><path d="M9.9 414.0v3.400" stroke="#4a4a5a" stroke-width=".8"/><rect x="7.1" y="425.2" width="5.600" height="5.600" fill="#fff" stroke="#a4a4ac" stroke-width=".8"/><path d="M8.2 428.0h3.400" stroke="#4a4a5a" stroke-width=".8"/><path d="M9.9 426.3v3.400" stroke="#4a4a5a" stroke-width=".8"/><g transform="translate(18.2,89.7)"><g transform="translate(-.6,.9) scale(.9)"><path d="M-.8 .2h3.600M-.8 .2v9.600h2" stroke="#b9bcc8" stroke-width=".7" fill="none"/><rect x="2.200" y="1.400" width="8.800" height="6.200" fill="#e8eef8" stroke="#8a9ab8" stroke-width=".6"/><rect x="3" y="2.200" width="7.200" height="4.600" fill="#3b7ce0"/><rect x="3" y="2.200" width="7.200" height="1.800" fill="#5a98f0"/><rect x="5.800" y="7.800" width="1.600" height="1.300" fill="#7a86a0"/><rect x="4.200" y="9" width="4.800" height=".9" fill="#5a6680"/></g></g><g transform="translate(31.1,102.0)"><g transform="translate(-.4,0) scale(1.14,1)"><path d="M0 1.200L3.400 .2 3.400 10.400 0 9.600z" fill="#e6ba44"/><path d="M0 1.200h5.600q.8 0 .8.800v7.600H0z" fill="#f7e28a"/><path d="M3.600 .2L7.200 1.400q.6.200.6.800v7.400l-4.200 1.200z" fill="#ecc85a"/><path d="M3.600 .2v10.600" stroke="#d4a636" stroke-width=".5"/><path d="M.4 1.600v8" stroke="#fcf2c0" stroke-width=".7"/><path d="M1.200 2.200h1.800v7.200H1.200z" fill="#faecaa" opacity=".7"/></g><rect x="4.300" y="5" width="6" height="4.800" fill="#2f6fd0" stroke="#1c4c9c" stroke-width=".6"/><rect x="5" y="5.600" width="4.600" height="2" fill="#5a98ec"/></g><g transform="translate(31.1,114.3)"><g transform="translate(-.4,0) scale(1.14,1)"><path d="M0 1.200L3.400 .2 3.400 10.400 0 9.600z" fill="#e6ba44"/><path d="M0 1.200h5.600q.8 0 .8.800v7.600H0z" fill="#f7e28a"/><path d="M3.600 .2L7.200 1.400q.6.200.6.800v7.400l-4.200 1.200z" fill="#ecc85a"/><path d="M3.600 .2v10.600" stroke="#d4a636" stroke-width=".5"/><path d="M.4 1.600v8" stroke="#fcf2c0" stroke-width=".7"/><path d="M1.200 2.200h1.800v7.200H1.200z" fill="#faecaa" opacity=".7"/></g><path d="M4.200 2h4.200l1.400 1.400v6.600H4.200z" fill="#eef0f6" stroke="#b4b8c8" stroke-width=".5"/><path d="M5.200 4.400h3.400M5.200 5.800h3.400M5.200 7.200h3.400" stroke="#b9bdd0" stroke-width=".5"/></g><g transform="translate(31.1,126.6)"><g transform="translate(-.4,0) scale(1.14,1)"><path d="M0 1.200L3.400 .2 3.400 10.400 0 9.600z" fill="#e6ba44"/><path d="M0 1.200h5.600q.8 0 .8.800v7.600H0z" fill="#f7e28a"/><path d="M3.600 .2L7.200 1.400q.6.200.6.800v7.400l-4.200 1.200z" fill="#ecc85a"/><path d="M3.600 .2v10.600" stroke="#d4a636" stroke-width=".5"/><path d="M.4 1.600v8" stroke="#fcf2c0" stroke-width=".7"/><path d="M1.200 2.200h1.800v7.200H1.200z" fill="#faecaa" opacity=".7"/></g><path d="M5.600 3.400h3v3.400h1.800l-3.300 3.800-3.300-3.800h1.800z" fill="#2a8ee6" stroke="#1868b8" stroke-width=".4"/></g><g transform="translate(31.1,138.9)"><g transform="translate(-.4,0) scale(1.14,1)"><path d="M0 1.200L3.400 .2 3.400 10.400 0 9.600z" fill="#e6ba44"/><path d="M0 1.200h5.600q.8 0 .8.800v7.600H0z" fill="#f7e28a"/><path d="M3.600 .2L7.200 1.400q.6.200.6.800v7.400l-4.200 1.200z" fill="#ecc85a"/><path d="M3.600 .2v10.600" stroke="#d4a636" stroke-width=".5"/><path d="M.4 1.600v8" stroke="#fcf2c0" stroke-width=".7"/><path d="M1.200 2.200h1.800v7.200H1.200z" fill="#faecaa" opacity=".7"/></g><path d="M6.600 2.200l1 .2q1.800 2 1.800 4.200 0 3.200-2.600 3.600-2-.2-2-2 0-1.800 1.800-2.200z" fill="#2a7cc8"/><ellipse cx="6.600" cy="8.200" rx="1.600" ry="1.300" fill="#6ac0e8"/></g><g transform="translate(31.1,151.2)"><g transform="translate(-.4,0) scale(1.14,1)"><path d="M0 1.200L3.400 .2 3.400 10.400 0 9.600z" fill="#e6ba44"/><path d="M0 1.200h5.600q.8 0 .8.800v7.600H0z" fill="#f7e28a"/><path d="M3.600 .2L7.200 1.400q.6.200.6.800v7.400l-4.200 1.200z" fill="#ecc85a"/><path d="M3.600 .2v10.600" stroke="#d4a636" stroke-width=".5"/><path d="M.4 1.600v8" stroke="#fcf2c0" stroke-width=".7"/><path d="M1.200 2.200h1.800v7.200H1.200z" fill="#faecaa" opacity=".7"/></g><rect x="4" y="3.600" width="6" height="6" fill="#eaf4fb" stroke="#c8d0d8" stroke-width=".4"/><rect x="4.400" y="4" width="5.200" height="2.600" fill="#8ecbf0"/><rect x="4.400" y="7.400" width="5.200" height="1.800" fill="#4c9a3c"/></g><g transform="translate(31.1,163.5)"><g transform="translate(-.4,0) scale(1.14,1)"><path d="M0 1.200L3.400 .2 3.400 10.400 0 9.600z" fill="#e6ba44"/><path d="M0 1.200h5.600q.8 0 .8.800v7.600H0z" fill="#f7e28a"/><path d="M3.600 .2L7.200 1.400q.6.200.6.800v7.400l-4.200 1.200z" fill="#ecc85a"/><path d="M3.600 .2v10.600" stroke="#d4a636" stroke-width=".5"/><path d="M.4 1.600v8" stroke="#fcf2c0" stroke-width=".7"/><path d="M1.200 2.200h1.800v7.200H1.200z" fill="#faecaa" opacity=".7"/></g><rect x="4.400" y="3" width="5" height="7.400" fill="#3a4668"/><rect x="5.400" y="3.800" width="3" height="2.400" fill="#7aa4d8"/><rect x="5.400" y="7" width="3" height="2.400" fill="#5a86c0"/></g><g transform="translate(36.1,181.0) scale(.88) translate(-36.1,-181.0)"><g transform="translate(31.1,175.8)"><rect x="-1.400" y="6.200" width="11.200" height="4" rx=".6" fill="#5a6a78" stroke="#3c4a56" stroke-width=".5"/><rect x="-.8" y="6.600" width="10" height="1.200" fill="#9ab0bc"/><rect x="1.400" y=".4" width="2.600" height="2.600" fill="#1ea0e8"/><rect x="4.600" y=".4" width="2.600" height="2.600" fill="#1ea0e8"/><rect x="1.400" y="3.400" width="2.600" height="2.400" fill="#1ea0e8"/><rect x="4.600" y="3.400" width="2.600" height="2.400" fill="#1ea0e8"/><circle cx="8.200" cy="9" r=".6" fill="#6ce06c"/></g></g><g transform="translate(44.0,188.1)"><g transform="translate(-.4,0) scale(1.14,1)"><path d="M0 1.200L3.400 .2 3.400 10.400 0 9.600z" fill="#e6ba44"/><path d="M0 1.200h5.600q.8 0 .8.800v7.600H0z" fill="#f7e28a"/><path d="M3.600 .2L7.200 1.400q.6.200.6.800v7.400l-4.200 1.200z" fill="#ecc85a"/><path d="M3.600 .2v10.600" stroke="#d4a636" stroke-width=".5"/><path d="M.4 1.600v8" stroke="#fcf2c0" stroke-width=".7"/><path d="M1.200 2.200h1.800v7.200H1.200z" fill="#faecaa" opacity=".7"/></g></g><g transform="translate(44.0,200.4)"><g transform="translate(-.4,0) scale(1.14,1)"><path d="M0 1.200L3.400 .2 3.400 10.400 0 9.600z" fill="#e6ba44"/><path d="M0 1.200h5.600q.8 0 .8.800v7.600H0z" fill="#f7e28a"/><path d="M3.600 .2L7.200 1.400q.6.200.6.800v7.400l-4.200 1.200z" fill="#ecc85a"/><path d="M3.600 .2v10.600" stroke="#d4a636" stroke-width=".5"/><path d="M.4 1.600v8" stroke="#fcf2c0" stroke-width=".7"/><path d="M1.200 2.200h1.800v7.200H1.200z" fill="#faecaa" opacity=".7"/></g></g><g transform="translate(44.0,212.7)"><g transform="translate(-.4,0) scale(1.14,1)"><path d="M0 1.200L3.400 .2 3.400 10.400 0 9.600z" fill="#e6ba44"/><path d="M0 1.200h5.600q.8 0 .8.800v7.600H0z" fill="#f7e28a"/><path d="M3.600 .2L7.200 1.400q.6.200.6.800v7.400l-4.200 1.200z" fill="#ecc85a"/><path d="M3.600 .2v10.600" stroke="#d4a636" stroke-width=".5"/><path d="M.4 1.600v8" stroke="#fcf2c0" stroke-width=".7"/><path d="M1.200 2.200h1.800v7.200H1.200z" fill="#faecaa" opacity=".7"/></g></g><g transform="translate(56.9,225.0)"><g transform="translate(-.4,0) scale(1.14,1)"><path d="M0 1.200L3.400 .2 3.400 10.400 0 9.600z" fill="#e6ba44"/><path d="M0 1.200h5.600q.8 0 .8.800v7.600H0z" fill="#f7e28a"/><path d="M3.600 .2L7.200 1.400q.6.200.6.800v7.400l-4.200 1.200z" fill="#ecc85a"/><path d="M3.600 .2v10.600" stroke="#d4a636" stroke-width=".5"/><path d="M.4 1.600v8" stroke="#fcf2c0" stroke-width=".7"/><path d="M1.200 2.200h1.800v7.200H1.200z" fill="#faecaa" opacity=".7"/></g></g><g transform="translate(56.9,237.3)"><g transform="translate(-.4,0) scale(1.14,1)"><path d="M0 1.200L3.400 .2 3.400 10.400 0 9.600z" fill="#e6ba44"/><path d="M0 1.200h5.600q.8 0 .8.800v7.600H0z" fill="#f7e28a"/><path d="M3.600 .2L7.200 1.400q.6.200.6.800v7.400l-4.200 1.200z" fill="#ecc85a"/><path d="M3.600 .2v10.600" stroke="#d4a636" stroke-width=".5"/><path d="M.4 1.600v8" stroke="#fcf2c0" stroke-width=".7"/><path d="M1.200 2.200h1.800v7.200H1.200z" fill="#faecaa" opacity=".7"/></g></g><g transform="translate(56.9,249.6)"><g transform="translate(-.4,0) scale(1.14,1)"><path d="M0 1.200L3.400 .2 3.400 10.400 0 9.600z" fill="#e6ba44"/><path d="M0 1.200h5.600q.8 0 .8.800v7.600H0z" fill="#f7e28a"/><path d="M3.600 .2L7.200 1.400q.6.200.6.800v7.400l-4.200 1.200z" fill="#ecc85a"/><path d="M3.600 .2v10.600" stroke="#d4a636" stroke-width=".5"/><path d="M.4 1.600v8" stroke="#fcf2c0" stroke-width=".7"/><path d="M1.200 2.200h1.800v7.200H1.200z" fill="#faecaa" opacity=".7"/></g></g><g transform="translate(69.8,261.9)"><g transform="translate(-.4,0) scale(1.14,1)"><path d="M0 1.200L3.400 .2 3.400 10.400 0 9.600z" fill="#e6ba44"/><path d="M0 1.200h5.600q.8 0 .8.800v7.600H0z" fill="#f7e28a"/><path d="M3.600 .2L7.200 1.400q.6.200.6.800v7.400l-4.200 1.200z" fill="#ecc85a"/><path d="M3.600 .2v10.600" stroke="#d4a636" stroke-width=".5"/><path d="M.4 1.600v8" stroke="#fcf2c0" stroke-width=".7"/><path d="M1.200 2.200h1.800v7.200H1.200z" fill="#faecaa" opacity=".7"/></g></g><g transform="translate(69.8,274.2)"><g transform="translate(-.4,0) scale(1.14,1)"><path d="M0 1.200L3.400 .2 3.400 10.400 0 9.600z" fill="#e6ba44"/><path d="M0 1.200h5.600q.8 0 .8.800v7.600H0z" fill="#f7e28a"/><path d="M3.600 .2L7.200 1.400q.6.200.6.800v7.400l-4.200 1.200z" fill="#ecc85a"/><path d="M3.600 .2v10.600" stroke="#d4a636" stroke-width=".5"/><path d="M.4 1.600v8" stroke="#fcf2c0" stroke-width=".7"/><path d="M1.200 2.200h1.800v7.200H1.200z" fill="#faecaa" opacity=".7"/></g></g><g transform="translate(69.8,286.5)"><g transform="translate(-.4,0) scale(1.14,1)"><path d="M0 1.200L3.400 .2 3.400 10.400 0 9.600z" fill="#e6ba44"/><path d="M0 1.200h5.600q.8 0 .8.800v7.600H0z" fill="#f7e28a"/><path d="M3.600 .2L7.200 1.400q.6.200.6.800v7.400l-4.200 1.200z" fill="#ecc85a"/><path d="M3.600 .2v10.600" stroke="#d4a636" stroke-width=".5"/><path d="M.4 1.600v8" stroke="#fcf2c0" stroke-width=".7"/><path d="M1.200 2.200h1.800v7.200H1.200z" fill="#faecaa" opacity=".7"/></g></g><g transform="translate(69.8,298.8)"><g transform="translate(-.4,0) scale(1.14,1)"><path d="M0 1.200L3.400 .2 3.400 10.400 0 9.600z" fill="#e6ba44"/><path d="M0 1.200h5.600q.8 0 .8.800v7.600H0z" fill="#f7e28a"/><path d="M3.600 .2L7.200 1.400q.6.200.6.800v7.400l-4.200 1.200z" fill="#ecc85a"/><path d="M3.600 .2v10.600" stroke="#d4a636" stroke-width=".5"/><path d="M.4 1.600v8" stroke="#fcf2c0" stroke-width=".7"/><path d="M1.200 2.200h1.800v7.200H1.200z" fill="#faecaa" opacity=".7"/></g></g><g transform="translate(69.8,311.1)"><g transform="translate(-.4,0) scale(1.14,1)"><path d="M0 1.200L3.400 .2 3.400 10.400 0 9.600z" fill="#e6ba44"/><path d="M0 1.200h5.600q.8 0 .8.800v7.600H0z" fill="#f7e28a"/><path d="M3.600 .2L7.200 1.400q.6.200.6.800v7.400l-4.200 1.200z" fill="#ecc85a"/><path d="M3.600 .2v10.600" stroke="#d4a636" stroke-width=".5"/><path d="M.4 1.600v8" stroke="#fcf2c0" stroke-width=".7"/><path d="M1.200 2.200h1.800v7.200H1.200z" fill="#faecaa" opacity=".7"/></g></g><g transform="translate(44.0,323.4)"><g transform="translate(-.4,0) scale(1.14,1)"><path d="M0 1.200L3.400 .2 3.400 10.400 0 9.600z" fill="#e6ba44"/><path d="M0 1.200h5.600q.8 0 .8.800v7.600H0z" fill="#f7e28a"/><path d="M3.600 .2L7.200 1.400q.6.200.6.800v7.400l-4.200 1.200z" fill="#ecc85a"/><path d="M3.600 .2v10.600" stroke="#d4a636" stroke-width=".5"/><path d="M.4 1.600v8" stroke="#fcf2c0" stroke-width=".7"/><path d="M1.200 2.200h1.800v7.200H1.200z" fill="#faecaa" opacity=".7"/></g></g><g transform="translate(36.1,340.9) scale(.88) translate(-36.1,-340.9)"><g transform="translate(31.1,335.7)"><rect x="-.6" y="3.600" width="10" height="6.400" rx=".6" fill="#4a64a8" stroke="#34488a" stroke-width=".5"/><rect x="0" y="4.200" width="8.800" height="2" fill="#7a92d0"/><path d="M2 4.200l2.600-3.800 2.600 3.800-1 1.600H3.200z" fill="#3aa848" stroke="#1f7a2c" stroke-width=".4"/><rect x="5.600" y="5" width="3" height="3.600" fill="#8a98d8"/></g></g><g transform="translate(23.2,353.2) scale(.88) translate(-23.2,-353.2)"><g transform="translate(18.2,348.0)"><path d="M.4 2.600q0-1 1-1h3l.8 1h4.600q1 0 1 1v5.800q0 1-1 1H1.400q-1 0-1-1z" fill="#f4d868" stroke="#d0a83a" stroke-width=".5"/><rect x=".8" y="3.800" width="9.600" height="2.200" fill="#8ed0a0"/><rect x=".8" y="5.800" width="9.600" height="2.600" fill="#3e9adc"/><path d="M1 8.400h9.400v1.600H1z" fill="#5aa8d8"/><path d="M3 9.400l2.400-2 2.400 2z" fill="#e8f4fa"/></g></g><g transform="translate(23.2,365.5) scale(.88) translate(-23.2,-365.5)"><g transform="translate(18.2,360.3)"><path d="M1.800 1.600h7.600l-1 8.400H2.800z" fill="#f2f6fc" stroke="#b0bcd4" stroke-width=".6"/><path d="M1.400 1.600h8.400" stroke="#9aa8c4" stroke-width=".8"/><path d="M4.600 4h2.200v3.600H4.600z" fill="#5a9ae8"/><path d="M5.200 4.800h1v2h-1z" fill="#d8e8fc"/></g></g><g transform="translate(23.2,377.8) scale(.88) translate(-23.2,-377.8)"><g transform="translate(18.2,372.6)"><rect x="0" y=".6" width="11" height="7.800" fill="#3a8ee0" stroke="#2468b4" stroke-width=".6"/><rect x="1.200" y="1.800" width="3.600" height="2.800" fill="#d8ecfc"/><rect x="6" y="1.800" width="3.800" height="1.400" fill="#a4d0f8"/><circle cx="3" cy="6.400" r="1.100" fill="#f0a848"/><path d="M6 5.400h3.800" stroke="#e8f4fe" stroke-width=".8"/><path d="M2 8.600h7l-1.800 2H4z" fill="#9ab8d8"/><circle cx="5.600" cy="9.400" r="1.300" fill="#78c848"/></g></g><g transform="translate(18.2,384.9)"><g transform="translate(1.400,0)"><g transform="translate(-.4,0) scale(1.14,1)"><path d="M0 1.200L3.400 .2 3.400 10.400 0 9.600z" fill="#e6ba44"/><path d="M0 1.200h5.600q.8 0 .8.800v7.600H0z" fill="#f7e28a"/><path d="M3.600 .2L7.200 1.400q.6.200.6.800v7.400l-4.200 1.200z" fill="#ecc85a"/><path d="M3.600 .2v10.600" stroke="#d4a636" stroke-width=".5"/><path d="M.4 1.600v8" stroke="#fcf2c0" stroke-width=".7"/><path d="M1.200 2.200h1.800v7.200H1.200z" fill="#faecaa" opacity=".7"/></g></g><circle cx="7.800" cy="5.200" r="1.600" fill="#8a7a50"/><path d="M5.200 10.400q0-3.400 2.600-3.400t2.600 3.400z" fill="#6a8a5a"/></g><g transform="translate(23.2,402.4) scale(.88) translate(-23.2,-402.4)"><g transform="translate(18.2,397.2)"><path d="M2.400 9.400q-2.800 0-2.800-2.200 0-1.800 2-2.200.4-2.600 3.200-2.600 1.800 0 2.800 1.400 1-.6 2-.2 1.400.6 1.400 2.200 1.200.4 1.200 1.800 0 1.800-2 1.800z" fill="#1a55c8"/><path d="M2.400 9.400q-2 0-2.400-1.400l6-2.600 5.600 3.200q-.6.800-1.800.8z" fill="#0e3ea8"/></g></g><g transform="translate(23.2,414.7) scale(.88) translate(-23.2,-414.7)"><g transform="translate(18.2,409.5)"><circle cx="1.200" cy="5.600" r="1.200" fill="#58b0e8"/><circle cx="4" cy="5.600" r="1.400" fill="#48a0e0"/><circle cx="7.400" cy="2.400" r="1.900" fill="#58b868"/><circle cx="9" cy="7.800" r="2.200" fill="#3c78d0"/><path d="M4 5.600l3.400-3.200M4 5.600l5 2.200" stroke="#9ac0d8" stroke-width=".6"/><circle cx="6.200" cy="6.200" r="1.200" fill="#78c4a0"/></g></g><g transform="translate(23.2,427.0) scale(.88) translate(-23.2,-427.0)"><g transform="translate(18.2,421.8)"><circle cx="4" cy="4.400" r="4.200" fill="#cfe0f4" stroke="#5a86c0" stroke-width=".7"/><path d="M-.200 4.400h8.400M4 .2v8.400M1.200 1.600q2.800 2 5.600 0M1.200 7.200q2.800-2 5.600 0" stroke="#5a86c0" stroke-width=".5" fill="none"/><rect x="3.800" y="4.800" width="7.200" height="5" fill="#e8eef8" stroke="#66789a" stroke-width=".6"/><rect x="4.600" y="5.600" width="5.600" height="3.400" fill="#3b7ce0"/><path d="M5.400 10.600h4" stroke="#5a6680" stroke-width=".8"/></g></g></svg><div class="t" style="left:29.5px;top:1.4000000000000004px;font-size:8.3px;color:#262626;transform:scaleX(0.895);transform-origin:0 50%;">This PC</div><div class="t" style="left:42.4px;top:13.7px;font-size:8.3px;color:#262626;transform:scaleX(0.953);transform-origin:0 50%;">Desktop</div><div class="t" style="left:42.4px;top:26.0px;font-size:8.3px;color:#262626;transform:scaleX(0.98);transform-origin:0 50%;">Documents</div><div class="t" style="left:42.4px;top:38.3px;font-size:8.3px;color:#262626;transform:scaleX(0.967);transform-origin:0 50%;">Downloads</div><div class="t" style="left:42.4px;top:50.6px;font-size:8.3px;color:#262626;transform:scaleX(0.99);transform-origin:0 50%;">Music</div><div class="a" style="left:40.2px;top:62.2px;width:31.500px;height:12px;background:#3399ff"></div><div class="t" style="left:42.4px;top:62.900000000000006px;font-size:8.3px;color:#fff;transform:scaleX(0.93);transform-origin:0 50%;">Pictures</div><div class="t" style="left:42.4px;top:75.2px;font-size:8.3px;color:#262626;transform:scaleX(0.94);transform-origin:0 50%;">Videos</div><div class="t" style="left:42.4px;top:87.5px;font-size:8.3px;color:#262626;transform:scaleX(0.927);transform-origin:0 50%;">Local Disk (C:)</div><div class="t" style="left:55.3px;top:99.8px;font-size:8.3px;color:#262626;transform:scaleX(0.942);transform-origin:0 50%;">PerfLogs</div><div class="t" style="left:55.3px;top:112.1px;font-size:8.3px;color:#262626;transform:scaleX(0.943);transform-origin:0 50%;">Program Files</div><div class="t" style="left:55.3px;top:124.4px;font-size:8.3px;color:#262626;transform:scaleX(0.86);transform-origin:0 50%;">Users</div><div class="t" style="left:68.2px;top:136.7px;font-size:8.3px;color:#262626;transform:scaleX(1);transform-origin:0 50%;">admin</div><div class="t" style="left:68.2px;top:149.0px;font-size:8.3px;color:#262626;transform:scaleX(1.02);transform-origin:0 50%;">ouji</div><div class="t" style="left:68.2px;top:161.3px;font-size:8.3px;color:#262626;transform:scaleX(0.973);transform-origin:0 50%;">Public</div><div class="t" style="left:81.1px;top:173.6px;font-size:8.3px;color:#262626;transform:scaleX(0.985);transform-origin:0 50%;">Public Docum</div><div class="t" style="left:81.1px;top:185.9px;font-size:8.3px;color:#262626;transform:scaleX(0.975);transform-origin:0 50%;">Public Downlc</div><div class="t" style="left:81.1px;top:198.2px;font-size:8.3px;color:#262626;transform:scaleX(0.975);transform-origin:0 50%;">Public Music</div><div class="t" style="left:81.1px;top:210.5px;font-size:8.3px;color:#262626;transform:scaleX(0.95);transform-origin:0 50%;">Public Picture:</div><div class="t" style="left:81.1px;top:222.8px;font-size:8.3px;color:#262626;transform:scaleX(0.967);transform-origin:0 50%;">Public Videos</div><div class="t" style="left:55.3px;top:235.1px;font-size:8.3px;color:#262626;transform:scaleX(1);transform-origin:0 50%;">Windows</div><div class="t" style="left:42.4px;top:247.4px;font-size:8.3px;color:#262626;transform:scaleX(0.897);transform-origin:0 50%;">CD Drive (D:) JM1_CCSA_</div><div class="t" style="left:29.5px;top:259.7px;font-size:8.3px;color:#262626;transform:scaleX(0.924);transform-origin:0 50%;">Libraries</div><div class="t" style="left:29.5px;top:272.0px;font-size:8.3px;color:#262626;transform:scaleX(0.922);transform-origin:0 50%;">Recycle Bin</div><div class="t" style="left:29.5px;top:284.3px;font-size:8.3px;color:#262626;transform:scaleX(0.973);transform-origin:0 50%;">Control Panel</div><div class="t" style="left:29.5px;top:296.6px;font-size:8.3px;color:#262626;transform:scaleX(0.7);transform-origin:0 50%;">????</div><div class="t" style="left:29.5px;top:308.9px;font-size:8.3px;color:#262626;transform:scaleX(0.944);transform-origin:0 50%;">OneDrive</div><div class="t" style="left:29.5px;top:321.2px;font-size:8.3px;color:#262626;transform:scaleX(1.0);transform-origin:0 50%;">Homegroup</div><div class="t" style="left:29.5px;top:333.5px;font-size:8.3px;color:#262626;transform:scaleX(1.0);transform-origin:0 50%;">Network</div><div class="a" style="left:0;top:380.3px;width:133px;height:11.5px;background:#f2f2f2"></div><div class="a" style="left:11.5px;top:380.8px;width:70px;height:10.5px;background:#cdcdcd"></div><svg style="left:3.0px;top:383.3px" width="4" height="6" viewBox="0 0 4 6"><path d="M3.300 .6L.8 3l2.500 2.400" fill="none" stroke="#444" stroke-width="1.100"/></svg><svg style="left:123.5px;top:383.3px" width="4" height="6" viewBox="0 0 4 6"><path d="M.7 .6L3.200 3 .7 5.400" fill="none" stroke="#444" stroke-width="1.100"/></svg>
</div>
<div class="a" style="left:137.200px;top:265.700px;width:4px;height:21.300px;background:#ccd7f6"></div>
<svg style="left:137.500px;top:274.400px" width="3" height="4" viewBox="0 0 3 4"><path d="M2.800 0v4L.2 2z" fill="#3c4cac"/></svg>
<div id="thumbs" class="a">
<svg width="0" height="0" style="left:0;top:0"><defs><linearGradient id="wp" x1="0" y1="0" x2="1" y2="1"><stop offset="0" stop-color="#0e86da"/><stop offset=".45" stop-color="#08a0f2"/><stop offset="1" stop-color="#10aefa"/></linearGradient><g id="wall"><rect width="63" height="47.500" fill="url(#wp)"/><path d="M0 36L61.500 .5 63 0V0H0z" fill="#147cd0" opacity=".5"/><path d="M20 47.500L60.500 1 63 0v24L43 47.500z" fill="#1cb0fc" opacity=".5"/><path d="M0 24.300h20L61.500 .6" stroke="#0a3e6c" stroke-width="1" fill="none" opacity=".9"/><path d="M0 36L20.500 24.300" stroke="#0a3e6c" stroke-width="1.100" fill="none" opacity=".9"/><path d="M18.500 47L60 1.600" stroke="#083a66" stroke-width="1.300" fill="none" opacity=".92"/><path d="M42.500 47L63 23.800" stroke="#083a66" stroke-width="1.300" fill="none" opacity=".92"/><rect y="45" width="63" height="2.500" fill="#16629e"/><path d="M1 46.300h12M56 46.300h6" stroke="#9fd0f0" stroke-width=".8" stroke-dasharray="1 .8"/><path d="M1.500 3v34" stroke="#cfe6f6" stroke-width="1.300" stroke-dasharray="1.800 3.400" opacity=".8"/></g><g id="tbar"><rect y="45" width="63" height="2.500" fill="#2f7fc2"/><path d="M1 46.300h24M50 46.300h12" stroke="#bfe0f6" stroke-width=".9" stroke-dasharray="1.200 .8"/></g><g id="smenu"><rect x="1" y="13" width="14.500" height="32" fill="#1a74b8"/><path d="M2 15.500v27" stroke="#d8ecf8" stroke-width="1.200" stroke-dasharray="1.400 2.200" opacity=".85"/><rect x="1" y="42.500" width="14.500" height="2" fill="#f0f4f8"/><rect x="16.500" y="13.500" width="4" height="4" fill="#2a8ae0"/><rect x="21" y="13.500" width="3.600" height="4" fill="#e8552a"/><rect x="25.500" y="13.500" width="5.500" height="5.500" fill="#2a8ae0"/><path d="M27 18l3-3.500" stroke="#fff" stroke-width=".9"/><rect x="16.500" y="20.500" width="7.500" height="7.500" fill="#e04a26"/><rect x="25" y="20.500" width="6" height="7.500" fill="#7a2cb8"/><rect x="16.500" y="29" width="14.500" height="7" fill="#a8a0a4"/><rect x="16.500" y="34" width="14.500" height="2" fill="#c02040"/><rect x="17" y="37.500" width="6.500" height="6.500" fill="#1aa838"/><rect x="25.500" y="38.500" width="4" height="3.500" fill="#48b8f0"/></g></defs></svg><svg class="th" style="left:9.2px;top:4.0px;overflow:hidden" width="63" height="47.5" viewBox="0 0 63 47.5"><rect width="63" height="47.500" fill="#2e8a32"/><rect width="63" height="2.200" fill="#6cb8e8"/><path d="M4 1.100h10M50 1.100h8" stroke="#2a4a78" stroke-width=".8" stroke-dasharray="1 1.400"/><rect y="2.200" width="63" height="1.600" fill="#d6e8d8"/><rect x="7" y="6.400" width="46.500" height="8.400" fill="#0c2c08"/><rect x="11" y="8" width="39" height="5.200" rx="1" fill="#2a7410"/><path d="M12.500 10.600h36" stroke="#c4f450" stroke-width="2.600" stroke-dasharray="2.200 .9"/><path d="M19 16.400h14" stroke="#f0f0c0" stroke-width=".8" stroke-dasharray="2 1" opacity=".8"/><path d="M13.500 18.200h34" stroke="#e8d850" stroke-width=".9" stroke-dasharray="3 1.200" opacity=".85"/><rect x="2.200" y="20" width="27.200" height="16" fill="#e4eae6"/><rect x="30.200" y="20" width="27.800" height="16" fill="#e4eae6"/><rect x="30.200" y="20" width="4.200" height="14" fill="#b4ecf4"/><rect x="30.200" y="20" width="2" height="4" fill="#f0b8e0"/><rect x="2.200" y="37.300" width="27.200" height="8" fill="#eef2ee"/><rect x="30.200" y="37.300" width="27.800" height="8" fill="#eef2ee"/><rect x="2.200" y="37.300" width="3.600" height="8" fill="#f0c030"/><rect x="30.200" y="37.300" width="4.200" height="8" fill="#f0c030"/><path d="M7 22.800h13M35.500 22.800h13M7 39.300h13M7 41.600h10M36 39.300h13M36 41.600h12" stroke="#2030c8" stroke-width="1.100"/><path d="M6 25.500h14M8 28h14M7 30.500h12M9 33h8M36 25.500h14M37 28h14M38 30.500h10M36 33h12" stroke="#3848d0" stroke-width="1" stroke-dasharray="1 1.300"/><path d="M2.200 35.300h55.800" stroke="#5aa45a" stroke-width="1"/><rect y="45.300" width="63" height="2.200" fill="#2a78c0"/><path d="M1 46.400h22M52 46.400h10" stroke="#c8e4f8" stroke-width=".9" stroke-dasharray="1.200 .8"/></svg><div class="lab" style="left:5.7px;top:54.6px"></div><div class="t" style="left:-59.7px;width:200px;text-align:center;top:55.2px;font-size:8.6px;color:#333;transform:scaleX(0.968);transform-origin:50% 50%;">firefox</div><div class="t" style="left:-59.7px;width:200px;text-align:center;top:64.6px;font-size:7px;color:#222;transform:scaleX(0.93);transform-origin:50% 50%;">Portable Network Gr...</div><div class="t" style="left:-59.7px;width:200px;text-align:center;top:72.6px;font-size:7px;color:#222;transform:scaleX(0.858);transform-origin:50% 50%;">1024x768x24</div><svg class="th" style="left:84.4px;top:4.0px;overflow:hidden" width="63" height="47.5" viewBox="0 0 63 47.5"><rect width="63" height="47.500" fill="#eef0f2"/><rect width="63" height="1.500" fill="#b9d8ec"/><rect x="10.500" y="2.500" width="34" height="41" fill="#e2e2e2"/><path d="M13 43.500q1-5.500 5.500-5.500 3.500 0 4.500 3.500 0-8 10-11.500 8-3 9.500-12.500V43.500z" fill="#cfcfcf"/><rect x="0" y="2" width="10" height="42" fill="#f4f4f4"/><path d="M1.500 5h7M1.500 8h7M1.500 11h7M1.500 14h7M1.500 20h7M1.500 24h7M1.500 28h7M1.500 33h7M1.500 37h7M1.500 40h7" stroke="#55585e" stroke-width=".8" stroke-dasharray="1.200 1.600" opacity=".8"/><rect x="1.500" y="38.500" width="7" height="1.800" fill="#222"/><rect x="45.500" y="5" width="14" height="39.500" fill="#f8f8f8"/><rect x="45.500" y="5" width="14" height="1.600" fill="#58a8d8"/><rect x="46.500" y="10.500" width="11" height="1.500" fill="#34507a"/><path d="M47 8.500h6M47 34h10M47 38h10M47 41h10" stroke="#666" stroke-width=".8" stroke-dasharray="1.500 1.500"/><rect x="51" y="40" width="6" height="3" fill="#222"/><use href="#tbar"/></svg><div class="lab" style="left:80.9px;top:54.6px"></div><div class="t" style="left:15.599999999999994px;width:200px;text-align:center;top:55.2px;font-size:8.6px;color:#333;transform:scaleX(1.0);transform-origin:50% 50%;">gimp</div><div class="t" style="left:15.599999999999994px;width:200px;text-align:center;top:64.6px;font-size:7px;color:#222;transform:scaleX(0.93);transform-origin:50% 50%;">Portable Network Gr...</div><div class="t" style="left:15.599999999999994px;width:200px;text-align:center;top:72.6px;font-size:7px;color:#222;transform:scaleX(0.858);transform-origin:50% 50%;">1024x768x24</div><svg class="th" style="left:159.6px;top:4.0px;overflow:hidden" width="63" height="47.5" viewBox="0 0 63 47.5"><rect width="63" height="47.500" fill="#fafafa"/><rect width="63" height="2" fill="#5aa6d8"/><rect y="2" width="63" height="4.500" fill="#2c2c30"/><rect x="20" y="3" width="18" height="2.500" fill="#f4f4f4"/><rect x="38" y="3" width="5" height="2.500" fill="#e8a020"/><path d="M2 8.500h50" stroke="#888" stroke-width=".9" stroke-dasharray="2.500 1.800"/><rect x="2" y="13" width="18.500" height="11.500" fill="#8a94a4"/><rect x="2" y="13" width="18.500" height="4" fill="#9cb4d0"/><rect x="41.500" y="13" width="18" height="14" fill="#4a78d4"/><path d="M43 15.500h15M43 18.500h15M44 21.500h13M45 24.500h11" stroke="#eef4fe" stroke-width="1.900" stroke-dasharray="2.400 1"/><path d="M47 19l4 3 3-3" stroke="#88c040" stroke-width="1.500" fill="none"/><path d="M23 13.500h16M23 16.500h16M23 19.500h16M23 22.500h16M23 25.500h16M23 29h14M23 32h14M23 36h14M2 27h18M42 29.500h17" stroke="#8088a8" stroke-width=".8" stroke-dasharray="1.200 2"/><rect x="2.500" y="30.500" width="6" height="4.500" fill="#8a5a4a"/><rect x="2.500" y="38" width="8" height="4" fill="#c0482a"/><rect x="23" y="37.500" width="6" height="4.500" fill="#c89a28"/><rect x="42" y="31" width="6" height="4" fill="#70747c"/><rect x="42" y="37.500" width="7" height="4.500" fill="#b88a30"/><rect x="60.500" y="6.500" width="2.500" height="38.500" fill="#e4e8ec"/><use href="#tbar"/></svg><div class="lab" style="left:156.1px;top:54.6px"></div><div class="t" style="left:90.80000000000001px;width:200px;text-align:center;top:55.2px;font-size:8.6px;color:#333;transform:scaleX(0.852);transform-origin:50% 50%;">ie</div><div class="t" style="left:90.80000000000001px;width:200px;text-align:center;top:64.6px;font-size:7px;color:#222;transform:scaleX(0.93);transform-origin:50% 50%;">Portable Network Gr...</div><div class="t" style="left:90.80000000000001px;width:200px;text-align:center;top:72.6px;font-size:7px;color:#222;transform:scaleX(0.858);transform-origin:50% 50%;">1024x768x24</div><svg class="th" style="left:234.8px;top:4.0px;overflow:hidden" width="63" height="47.5" viewBox="0 0 63 47.5"><rect width="63" height="47.500" fill="#fff"/><rect width="63" height="1.500" fill="#b9d8ec"/><rect y="1.500" width="63" height="5" fill="#eef0f2"/><path d="M1 3h28M8 5.200h48" stroke="#6a6e78" stroke-width=".8" stroke-dasharray="1 1.500"/><path d="M1.500 7v34" stroke="#444" stroke-width="1" stroke-dasharray=".8 1.800"/><path d="M61 7v34" stroke="#888" stroke-width="1.200" stroke-dasharray=".8 2.200"/><ellipse cx="35.800" cy="20.500" rx="7.800" ry="9" fill="#1eea1e"/><path d="M31 14l6-3.500 3 2.500z" fill="#1eea1e"/><circle cx="25.200" cy="26.200" r="10.200" fill="#e01212"/><circle cx="25.200" cy="26.200" r="9.800" fill="none" stroke="#9a0a0a" stroke-width="1.200" stroke-dasharray="1 1.400"/><circle cx="25.200" cy="26.700" r="6" fill="#aa0e0e"/><circle cx="25.200" cy="27" r="2.200" fill="#2a0404"/><ellipse cx="28" cy="39" rx="9.500" ry="2" fill="#e048d8"/><rect y="41" width="63" height="2" fill="#444"/><path d="M0 42h63" stroke="#e8e8e8" stroke-width="2" stroke-dasharray="3 5"/><rect x="16" y="41" width="4" height="2" fill="#e02020"/><rect x="20" y="41" width="3" height="2" fill="#30c030"/><rect x="23" y="41" width="3" height="2" fill="#3050e0"/><rect x="30" y="41" width="8" height="2" fill="#e8a0b0"/><rect x="55" y="41" width="6" height="2" fill="#e8a040"/><rect y="43" width="63" height="2" fill="#e8eaee"/><use href="#tbar"/></svg><div class="lab" style="left:231.3px;top:54.6px"></div><div class="t" style="left:166.0px;width:200px;text-align:center;top:55.2px;font-size:8.6px;color:#333;transform:scaleX(0.907);transform-origin:50% 50%;">inkscape</div><div class="t" style="left:166.0px;width:200px;text-align:center;top:64.6px;font-size:7px;color:#222;transform:scaleX(0.93);transform-origin:50% 50%;">Portable Network Gr...</div><div class="t" style="left:166.0px;width:200px;text-align:center;top:72.6px;font-size:7px;color:#222;transform:scaleX(0.858);transform-origin:50% 50%;">1024x768x24</div><svg class="th" style="left:310.0px;top:4.0px;overflow:hidden" width="63" height="47.5" viewBox="0 0 63 47.5"><rect width="63" height="47.500" fill="#fdfdfd"/><rect width="63" height="1.800" fill="#8cc8ec"/><rect y="1.800" width="63" height="4" fill="#eef1f5"/><path d="M2 4h28M44 4h14" stroke="#70788a" stroke-width=".9" stroke-dasharray="1.200 1.300"/><rect x="0" y="6" width="12" height="39" fill="#f2f3f6"/><path d="M2 8h6M2 11h6M2 14h6M2 17h6M2 23h6M2 27h5" stroke="#66708a" stroke-width=".8" stroke-dasharray="1 1.200"/><rect x="0" y="21" width="19" height="24" fill="#e6e8ec"/><path d="M19 10h12M19 12.500h14M19 15h10M19 17.500h14" stroke="#444c60" stroke-width=".9" stroke-dasharray="1.400 1"/><path d="M37 11v8M39 11v8M52 11v8M55 11v8M58 11v9" stroke="#8a7a6a" stroke-width=".9" stroke-dasharray="1 1"/><rect x="16" y="21.500" width="44" height="17" fill="#fff" stroke="#e0e2e8" stroke-width=".5"/><path d="M20 26.200h25" stroke="#1c2440" stroke-width="1.300" stroke-dasharray="2 .6"/><path d="M20 29.500h24M20 31.500h16" stroke="#9098a8" stroke-width=".7" stroke-dasharray="1.500 1"/><path d="M20 37.500h14M20 40h8" stroke="#8890a4" stroke-width=".7" stroke-dasharray="1.500 1"/><circle cx="52" cy="28.500" r="5" fill="#2a5cb0"/><circle cx="51.500" cy="29.500" r="2.600" fill="#e8f0fa"/><path d="M47.500 27q4-5 8.500-1" stroke="#1a3c88" stroke-width="1.600" fill="none"/><rect x="0" y="42" width="63" height="3" fill="#f0f2f5"/><use href="#tbar"/></svg><div class="lab" style="left:306.5px;top:54.6px"></div><div class="t" style="left:241.10000000000002px;width:200px;text-align:center;top:55.2px;font-size:8.6px;color:#333;transform:scaleX(0.973);transform-origin:50% 50%;">mail</div><div class="t" style="left:241.10000000000002px;width:200px;text-align:center;top:64.6px;font-size:7px;color:#222;transform:scaleX(0.93);transform-origin:50% 50%;">Portable Network Gr...</div><div class="t" style="left:241.10000000000002px;width:200px;text-align:center;top:72.6px;font-size:7px;color:#222;transform:scaleX(0.858);transform-origin:50% 50%;">1024x768x24</div><svg class="th" style="left:385.2px;top:4.0px;overflow:hidden" width="63" height="47.5" viewBox="0 0 63 47.5"><rect width="63" height="47.500" fill="#fff"/><rect width="63" height="1.800" fill="#8cc8ec"/><rect y="1.800" width="63" height="4.200" fill="#eef1f5"/><path d="M2 4h28M44 4h16" stroke="#70788a" stroke-width=".9" stroke-dasharray="1.200 1.300"/><rect x="0" y="6" width="12" height="39" fill="#f1f2f5"/><path d="M2 8h5M2 11h4M2 14h5M2 19h4M2 22h5M2 25h4M2 28h4" stroke="#66708a" stroke-width=".8" stroke-dasharray="1 1.200"/><rect x="2" y="18" width="2" height="1.500" fill="#e0a020"/><path d="M12 22.500h51" stroke="#d8dce4" stroke-width=".8"/><path d="M12 6v39" stroke="#dfe2e8" stroke-width=".6"/><use href="#tbar"/></svg><div class="lab" style="left:381.7px;top:54.6px"></div><div class="t" style="left:316.4px;width:200px;text-align:center;top:55.2px;font-size:8.6px;color:#333;transform:scaleX(0.914);transform-origin:50% 50%;">mail01</div><div class="t" style="left:316.4px;width:200px;text-align:center;top:64.6px;font-size:7px;color:#222;transform:scaleX(0.93);transform-origin:50% 50%;">Portable Network Gr...</div><div class="t" style="left:316.4px;width:200px;text-align:center;top:72.6px;font-size:7px;color:#222;transform:scaleX(0.858);transform-origin:50% 50%;">1024x768x24</div><svg class="th" style="left:460.4px;top:4.0px;overflow:hidden" width="63" height="47.5" viewBox="0 0 63 47.5"><rect width="63" height="47.500" fill="#fff"/><rect width="63" height="1.500" fill="#a8d4f0"/><rect y="1.500" width="63" height="5.500" fill="#f0f1f3"/><path d="M3 3.500h18M14 5.500h30" stroke="#7a8090" stroke-width=".8" stroke-dasharray="1 1.300"/><rect x="0" y="7" width="5.500" height="38" fill="#bdbdbd"/><rect x="57" y="7" width="6" height="38" fill="#c4c4c4"/><rect x="5.500" y="7" width="51.500" height="38" fill="#fff"/><path d="M11.500 15.500h6" stroke="#8a3030" stroke-width="1" stroke-dasharray="1.200 .8"/><path d="M20 15.500h5" stroke="#5060a0" stroke-width="1" stroke-dasharray="1 .8"/><path d="M11.500 18.500h3M12 22h2.500" stroke="#c05030" stroke-width="1"/><path d="M11.500 31h7" stroke="#3848a8" stroke-width="1" stroke-dasharray="1.200 .8"/><path d="M13.500 34h1.500" stroke="#223" stroke-width="1.200"/><path d="M11.500 38.500h3" stroke="#a03040" stroke-width="1"/><use href="#tbar"/></svg><div class="lab" style="left:456.9px;top:54.6px"></div><div class="t" style="left:391.6px;width:200px;text-align:center;top:55.2px;font-size:8.6px;color:#333;transform:scaleX(0.953);transform-origin:50% 50%;">nihon</div><div class="t" style="left:391.6px;width:200px;text-align:center;top:64.6px;font-size:7px;color:#222;transform:scaleX(0.93);transform-origin:50% 50%;">Portable Network Gr...</div><div class="t" style="left:391.6px;width:200px;text-align:center;top:72.6px;font-size:7px;color:#222;transform:scaleX(0.858);transform-origin:50% 50%;">1024x768x24</div><svg class="th" style="left:9.2px;top:90.3px;overflow:hidden" width="63" height="43.6" viewBox="0 0 63 43.6"><rect width="63" height="44" fill="#fff"/><rect width="63" height="1.600" fill="#7cc0ec"/><rect y="1.600" width="63" height="5.400" fill="#f4f6f8"/><path d="M1.500 3.300h20M34 3.300h16" stroke="#7a8494" stroke-width=".8" stroke-dasharray="1 1.200"/><path d="M1.500 5.500h4" stroke="#e8a020" stroke-width="1"/><path d="M2 8.200h22" stroke="#8aa4d0" stroke-width=".9" stroke-dasharray="1.500 1"/><path d="M.5 7v36" stroke="#e4e8ee" stroke-width="1"/><rect x="61.500" y="7" width="1.500" height="35" fill="#eef0f4"/><rect y="42.500" width="63" height="1.500" fill="#e4e8ee"/><path d="M1 43.300h60" stroke="#50586a" stroke-width=".8" stroke-dasharray="1.500 14"/></svg><div class="lab" style="left:5.7px;top:139.6px"></div><div class="t" style="left:-59.7px;width:200px;text-align:center;top:140.2px;font-size:8.6px;color:#333;transform:scaleX(0.968);transform-origin:50% 50%;">notepad++</div><div class="t" style="left:-59.7px;width:200px;text-align:center;top:149.6px;font-size:7px;color:#222;transform:scaleX(0.93);transform-origin:50% 50%;">Portable Network Gr...</div><div class="t" style="left:-59.7px;width:200px;text-align:center;top:157.6px;font-size:7px;color:#222;transform:scaleX(0.858);transform-origin:50% 50%;">941x652x24</div><svg class="th" style="left:84.4px;top:88.9px;overflow:hidden" width="63" height="47.5" viewBox="0 0 63 47.5"><rect width="63" height="47.500" fill="#fff"/><rect width="63" height="2.800" fill="#7cc0ec"/><rect x="28" y="0" width="35" height="1.800" fill="#c8e4f6"/><path d="M1.500 1.500h10" stroke="#1c60a0" stroke-width="1.400" stroke-dasharray="1.400 .8"/><rect y="2.800" width="63" height="3" fill="#f0f2f6"/><path d="M5 10.500h8" stroke="#30343c" stroke-width="1.100" stroke-dasharray="1.400 .6"/><path d="M17 13h20M11 15.500h26" stroke="#70747c" stroke-width=".7" stroke-dasharray="1 1"/><rect x="3" y="18.500" width="55" height="7.500" fill="#5a6a34"/><rect x="3" y="18.500" width="55" height="2.500" fill="#9cc4e4"/><path d="M3 21.500q6-2.500 10 0t9-.5 10 0 12-.5 14 0v2H3z" fill="#2c3c20"/><rect x="3" y="24" width="55" height="2" fill="#8a8a50"/><rect x="28" y="22.500" width="18" height="2.500" fill="#a8a868"/><path d="M6.500 30l1.500-1.500" stroke="#30a040" stroke-width="1"/><rect x="4" y="33.500" width="55" height="9" fill="#fdfbe8"/><path d="M8 35.500h46M6 38h50M8 40.500h46" stroke="#6a6a5a" stroke-width=".7" stroke-dasharray="1 1.100"/><path d="M10 37h30" stroke="#d89020" stroke-width=".6" stroke-dasharray="1 2"/><rect x="61" y="6" width="2" height="39" fill="#eef0f4"/><use href="#tbar"/></svg><div class="lab" style="left:80.9px;top:139.6px"></div><div class="t" style="left:15.599999999999994px;width:200px;text-align:center;top:140.2px;font-size:8.6px;color:#333;transform:scaleX(0.902);transform-origin:50% 50%;">pasopia</div><div class="t" style="left:15.599999999999994px;width:200px;text-align:center;top:149.6px;font-size:7px;color:#222;transform:scaleX(0.93);transform-origin:50% 50%;">Portable Network Gr...</div><div class="t" style="left:15.599999999999994px;width:200px;text-align:center;top:157.6px;font-size:7px;color:#222;transform:scaleX(0.858);transform-origin:50% 50%;">1024x768x24</div><svg class="th" style="left:159.6px;top:88.9px;overflow:hidden" width="63" height="47.5" viewBox="0 0 63 47.5"><rect width="63" height="47.500" fill="#fff"/><rect width="23.500" height="47.500" fill="#1168ac"/><rect x="23.500" width="39.500" height="1.600" fill="#58a8e0"/><path d="M3 6h7" stroke="#a8d0ec" stroke-width=".8" stroke-dasharray="1 .8"/><rect x="4" y="9.500" width="4.500" height="2" fill="#d8ecf8"/><path d="M3 13.200h8M3 16.500h3M5 19.500h3M5 23h2M5 26h2M3 29.500h9M5 32.500h3M3 35.500h9" stroke="#e8f4fc" stroke-width=".9" stroke-dasharray="1.200 .6"/><path d="M27.500 6h6" stroke="#333" stroke-width=".8" stroke-dasharray="1 .6"/><clipPath id="cps"><rect width="31" height="34"/></clipPath><g transform="translate(27.500,8.500)" clip-path="url(#cps)"><rect width="31" height="34" fill="#6a7a20"/><g fill="none" stroke-width="3"><path d="M-4 4Q14 8 34 32" stroke="#d8a030"/><path d="M-4 8Q12 12 30 36" stroke="#e04828"/><path d="M-4 12Q10 16 26 38" stroke="#2a8a68"/><path d="M-4 16Q8 20 22 40" stroke="#e8c040"/><path d="M0 0Q18 4 36 24" stroke="#5a2a18"/><path d="M6 -2Q22 2 36 16" stroke="#3a7a28"/><path d="M12 -3Q26 0 36 9" stroke="#d8d0a0"/><path d="M18 -3Q28 -1 36 4" stroke="#c83820"/><path d="M-4 20Q6 24 18 42" stroke="#d05028"/></g><rect x="0" y="23.500" width="11.500" height="10.500" fill="#5a5a5a"/><circle cx="5.800" cy="27.500" r="2.600" fill="#e8e8e8"/><path d="M1.500 34q0-4.500 4.300-4.500t4.300 4.500z" fill="#f4f4f4"/><rect x="12.500" y="24" width="18.500" height="10" fill="#7a8a28"/><circle cx="20" cy="29" r="3" fill="#9a4a50" opacity=".8"/><circle cx="26" cy="27" r="2.500" fill="#b8b040" opacity=".8"/></g><rect y="45" width="63" height="2.500" fill="#1a5e98"/><path d="M1 46.300h22" stroke="#9fd0f0" stroke-width=".8" stroke-dasharray="1 .8"/><rect x="23.500" y="45" width="39.500" height="2.500" fill="#3a86c8"/></svg><div class="lab" style="left:156.1px;top:139.6px"></div><div class="t" style="left:90.80000000000001px;width:200px;text-align:center;top:140.2px;font-size:8.6px;color:#333;transform:scaleX(0.945);transform-origin:50% 50%;">setting</div><div class="t" style="left:90.80000000000001px;width:200px;text-align:center;top:149.6px;font-size:7px;color:#222;transform:scaleX(0.93);transform-origin:50% 50%;">Portable Network Gr...</div><div class="t" style="left:90.80000000000001px;width:200px;text-align:center;top:157.6px;font-size:7px;color:#222;transform:scaleX(0.858);transform-origin:50% 50%;">1024x768x24</div><svg class="th" style="left:234.8px;top:88.9px;overflow:hidden" width="63" height="47.5" viewBox="0 0 63 47.5"><use href="#wall"/><use href="#smenu"/></svg><div class="lab" style="left:231.3px;top:139.6px"></div><div class="t" style="left:166.0px;width:200px;text-align:center;top:140.2px;font-size:8.6px;color:#333;transform:scaleX(0.998);transform-origin:50% 50%;">top</div><div class="t" style="left:166.0px;width:200px;text-align:center;top:149.6px;font-size:7px;color:#222;transform:scaleX(0.93);transform-origin:50% 50%;">Portable Network Gr...</div><div class="t" style="left:166.0px;width:200px;text-align:center;top:157.6px;font-size:7px;color:#222;transform:scaleX(0.858);transform-origin:50% 50%;">1024x768x24</div><svg class="th" style="left:310.0px;top:88.9px;overflow:hidden" width="63" height="47.5" viewBox="0 0 63 47.5"><use href="#wall"/></svg><div class="lab" style="left:306.5px;top:139.6px"></div><div class="t" style="left:241.10000000000002px;width:200px;text-align:center;top:140.2px;font-size:8.6px;color:#333;transform:scaleX(0.958);transform-origin:50% 50%;">top3</div><div class="t" style="left:241.10000000000002px;width:200px;text-align:center;top:149.6px;font-size:7px;color:#222;transform:scaleX(0.93);transform-origin:50% 50%;">Portable Network Gr...</div><div class="t" style="left:241.10000000000002px;width:200px;text-align:center;top:157.6px;font-size:7px;color:#222;transform:scaleX(0.858);transform-origin:50% 50%;">1024x768x24</div><svg class="th" style="left:385.2px;top:88.9px;overflow:hidden" width="63" height="47.5" viewBox="0 0 63 47.5"><use href="#wall"/><use href="#smenu"/></svg><div class="lab" style="left:381.7px;top:139.6px"></div><div class="t" style="left:316.4px;width:200px;text-align:center;top:140.2px;font-size:8.6px;color:#333;transform:scaleX(0.899);transform-origin:50% 50%;">top01</div><div class="t" style="left:316.4px;width:200px;text-align:center;top:149.6px;font-size:7px;color:#222;transform:scaleX(0.93);transform-origin:50% 50%;">Portable Network Gr...</div><div class="t" style="left:316.4px;width:200px;text-align:center;top:157.6px;font-size:7px;color:#222;transform:scaleX(0.858);transform-origin:50% 50%;">1024x768x24</div><svg class="th" style="left:460.4px;top:88.9px;overflow:hidden" width="63" height="47.5" viewBox="0 0 63 47.5"><use href="#wall"/></svg><div class="lab" style="left:456.9px;top:139.6px"></div><div class="t" style="left:391.6px;width:200px;text-align:center;top:140.2px;font-size:8.6px;color:#333;transform:scaleX(0.899);transform-origin:50% 50%;">top02</div><div class="t" style="left:391.6px;width:200px;text-align:center;top:149.6px;font-size:7px;color:#222;transform:scaleX(0.93);transform-origin:50% 50%;">Portable Network Gr...</div><div class="t" style="left:391.6px;width:200px;text-align:center;top:157.6px;font-size:7px;color:#222;transform:scaleX(0.858);transform-origin:50% 50%;">1024x768x24</div>
</div>
<div class="a" style="left:141px;top:330.500px;width:550.500px;height:4.500px;background:#f5f6f8"></div>
<div id="preview" class="a"></div>
<div id="status" class="a"></div>
<div class="t" style="left:2px;top:485.6px;font-size:8.3px;color:#1a1a1a;letter-spacing:-0.22px;">14 object(s) [ 4.11 MB ] [Free disk space: 9.25 GB]</div>
<div class="sep" style="left:176.500px;top:483px;height:13px;background:#d4d6da"></div>
<div class="a" style="left:688px;top:482px;width:12px;height:16px;background:#f6f6f6"></div>
<div class="sep" style="left:687.500px;top:483px;height:13px;background:#e2e2e4"></div>
<div class="a" style="left:691px;top:68.500px;width:5.200px;height:412.700px;background:linear-gradient(90deg,#eef3f8 0,#eef3f8 .6px,#b3d1ec .6px)"></div>
<div class="a" style="left:696.200px;top:69.500px;width:1.500px;height:411.700px;background:#416e7e"></div>
<div class="a" style="left:697.700px;top:70px;width:2.300px;height:411.200px;background:#9c92a4"></div>
<div class="a" style="left:698px;top:30px;width:1px;height:17px;background:#c8c8c8"></div>
<div id="taskbar" class="a">
<svg style="left:0;top:0" width="700" height="27" viewBox="0 0 700 27"><defs><linearGradient id="tg" x1="0" y1="0" x2="1" y2="0"><stop offset="0" stop-color="#2d8ecb"/><stop offset=".6" stop-color="#2a8bc4"/><stop offset="1" stop-color="#2c90c6"/></linearGradient></defs><rect width="700" height="27" fill="url(#tg)"/><path d="M27.500 0h5.500L7 27H.5z" fill="#1d3f58" opacity=".85"/><path d="M229.500 0h6L205.500 27h-6.500z" fill="#24506e" opacity=".8"/><path d="M466 27L490 0h9L476 27z" fill="#35576a" opacity=".9"/><rect x="284" y="0" width="40" height="27" fill="#4d9bd3"/><rect x="327" y="0" width="38.600" height="27" fill="#85bbe1"/><rect x="327" y="0" width="39" height="27" fill="none" stroke="#a9d2ee" stroke-width=".8"/><path d="M8.200 6.200L15.600 5v7H8.200zM16.600 4.800L26 3.300V12H16.600zM8.200 13H15.600v7L8.200 18.800zM16.600 13H26v8.700L16.600 20.200z" fill="#fff"/><circle cx="57.500" cy="10.600" r="4.200" fill="none" stroke="#fff" stroke-width="1.800"/><path d="M54.600 13.800L48.600 20" stroke="#fff" stroke-width="2.200" stroke-linecap="round"/><path d="M89 8.500h11.500v8" fill="none" stroke="#fff" stroke-width="1.300"/><rect x="86.500" y="10.500" width="11.500" height="8" fill="#fff"/><path d="M141.800 15.800A7.200 7.200 0 1 1 142.600 10.800" fill="none" stroke="#45bcf4" stroke-width="4.200"/><rect x="131.500" y="10.600" width="12.500" height="2.700" fill="#45bcf4"/><path d="M139.500 15.200l4.800 1.800-2.400 3.400z" fill="#45bcf4"/><path d="M125 20q-2.200-4.500 5-11.500 7.500-6.800 13-6 2.800.8 1.200 4.500" fill="none" stroke="#f2d436" stroke-width="1.500"/><path d="M166 8.500q0-1 1-1h6l1.500 1.800h12q1 0 1 1V22H166z" fill="#f2d9a4"/><path d="M166 11h21.500v2H166z" fill="#e0b878"/><rect x="170" y="14" width="14" height="8" fill="#4a9ee4"/><rect x="173" y="17.500" width="8" height="4.500" fill="#2a6cb8"/><rect x="209.500" y="2.500" width="20" height="22" fill="#149a1e"/><path d="M213.500 9h12l-.8 11h-10.400z" fill="#fff"/><path d="M216.500 9.500q0-4 3-4t3 4" fill="none" stroke="#fff" stroke-width="1.100"/><path d="M216.300 12.300l2.800-.4v2.600h-2.800zM219.700 11.800l3-.4v3.100h-3zM216.300 15.100h2.800v2.600l-2.800-.4zM219.700 15.100h3v3.100l-3-.4z" fill="#149a1e"/><circle cx="261.600" cy="13" r="10.300" fill="#e8641c"/><circle cx="262" cy="10.500" r="6.600" fill="#2c3c98"/><path d="M251.500 11q1-7.500 9.500-8.500-4 3-3 6 3 0 4.200 2-2 2.200-4.200 2.200 1 4 5 4t5.500-5q2.200 9.500-7 11.500-9.500-.5-10-12.200z" fill="#f08a1e"/><path d="M258 4.500q5.500-3 10.500 1.500-4-1-6.500 1z" fill="#4a78d8"/><path d="M263 15.500q4.500 1 6.500-3.500.5 6.500-5.500 8.500z" fill="#f8b830"/><rect x="294" y="3.500" width="20.500" height="20" rx="1.500" fill="#1568c4"/><rect x="294" y="3.500" width="20.500" height="20" rx="1.500" fill="none" stroke="#0e4a94" stroke-width=".6"/><path d="M296.500 10.500q3-3 5 0t-1.500 5q-3 .5-2.500-3 4 6 9 4 5-3 4.500-10" fill="none" stroke="#fff" stroke-width="1.700"/><path d="M308 8.500l3.200-3.500 2 4.500" fill="none" stroke="#fff" stroke-width="1.600"/><ellipse cx="346.500" cy="14.600" rx="8.600" ry="5" fill="#eca41c"/><ellipse cx="346.500" cy="13.300" rx="6.400" ry="3" fill="#f6c448"/><circle cx="339" cy="9.500" r="2.100" fill="#f2b226"/><circle cx="344" cy="7.200" r="2.200" fill="#f2b226"/><circle cx="350" cy="7.200" r="2.200" fill="#f2b226"/><circle cx="355" cy="9.800" r="2" fill="#f2b226"/><circle cx="347" cy="14.700" r="3.500" fill="#cc2c2c"/><circle cx="346.200" cy="14.300" r="2" fill="#8a4048"/><circle cx="348" cy="13.500" r="1" fill="#f4c8c8"/><path d="M559 15.500l2.200-2.400 2.200 2.400z" fill="#fff"/><path d="M574.300 9.600v8.600" stroke="#fff" stroke-width="1.100"/><path d="M574.800 9.800h3.800v.9h3.600v4h-3.600v-.9h-3.800z" fill="#fff"/><rect x="591.500" y="8.800" width="7.500" height="5.500" fill="none" stroke="#fff" stroke-width="1"/><path d="M594 17.500h5M596.500 14.500v3" stroke="#fff" stroke-width="1"/><path d="M589.500 8v9.500M588 9.500h3M588 12h3" stroke="#fff" stroke-width=".8"/><path d="M606 11.500h2l2.800-2.700v9.400L608 15.500h-2z" fill="#fff"/><path d="M612.300 10.500q1.500 2.500 0 5M613.800 9.300q2.300 3.700 0 7.400" fill="none" stroke="#fff" stroke-width=".7" opacity=".9"/></svg><div class="t" style="left:626.7px;top:9.6px;font-size:8.6px;color:#fff;transform:scaleX(0.8);transform-origin:0 50%;">ENG</div><div class="t" style="left:570.6px;width:200px;text-align:center;top:4.1px;font-size:8.6px;color:#fff;transform:scaleX(0.905);transform-origin:50% 50%;">7:14 AM</div><div class="t" style="left:570.8px;width:200px;text-align:center;top:15.2px;font-size:8.6px;color:#fff;transform:scaleX(0.885);transform-origin:50% 50%;">10/3/2014</div>
</div>
</div></body></html>
